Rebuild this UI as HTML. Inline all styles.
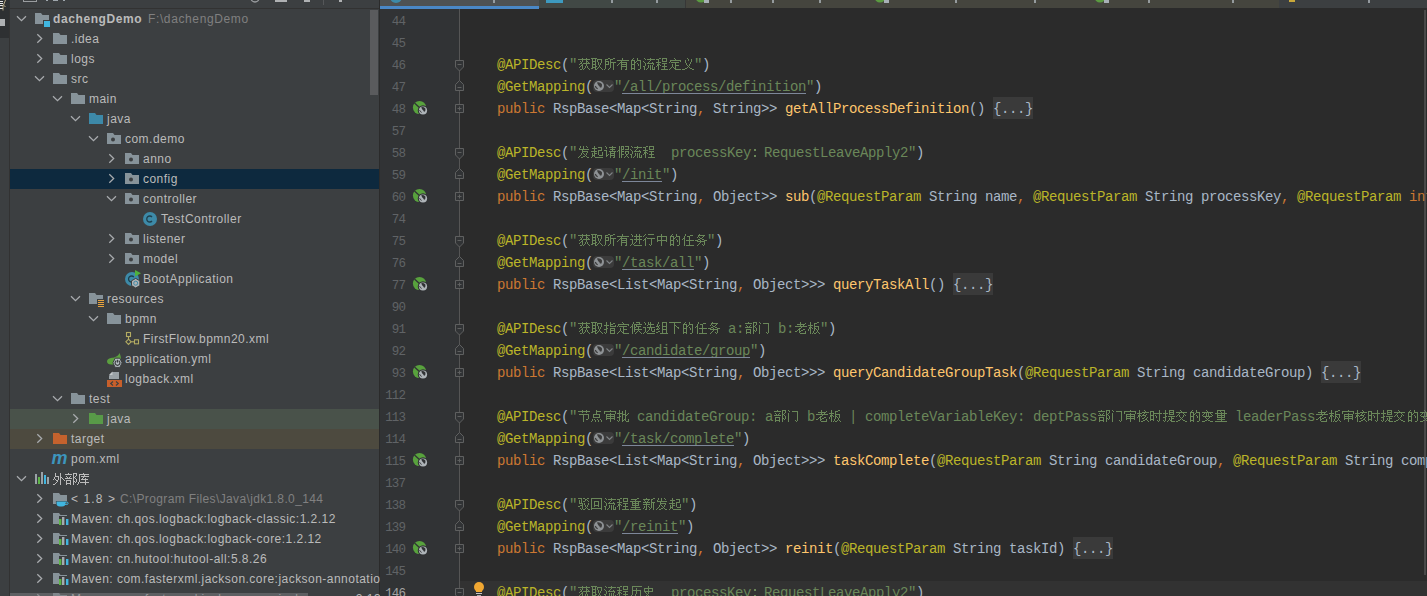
<!DOCTYPE html>
<html><head><meta charset="utf-8"><title>IDEA</title>
<style>
html,body{margin:0;padding:0;}
body{width:1427px;height:596px;overflow:hidden;position:relative;background:#2B2B2B;}
.a{position:absolute;}
.code{position:absolute;font-family:"Liberation Mono",monospace;font-size:14px;letter-spacing:-0.4px;line-height:22px;white-space:pre;}
.ui{position:absolute;font-family:"Liberation Sans",sans-serif;font-size:12px;letter-spacing:0.47px;line-height:20px;white-space:pre;color:#BBBBBB;}
.ln{position:absolute;font-family:"Liberation Mono",monospace;font-size:12.5px;letter-spacing:-0.9px;line-height:22px;white-space:pre;color:#606366;text-align:right;width:40px;left:365px;}
svg{position:absolute;overflow:visible;}
</style></head><body>

<div class="a" style="left:0;top:0;width:9px;height:596px;background:#3C3F41"></div>
<div class="a" style="left:0;top:0;width:9px;height:38px;background:#2E3032"></div>
<div class="a" style="left:9px;top:0;width:1px;height:596px;background:#323232"></div>
<div class="a" style="left:0;top:1px;width:3px;height:1px;background:#E6E6E6"></div>
<div class="a" style="left:0;top:3px;width:3px;height:1px;background:#E6E6E6"></div>
<div class="a" style="left:0;top:5px;width:3px;height:1px;background:#E6E6E6"></div>
<div class="a" style="left:0;top:8px;width:3px;height:1px;background:#E6E6E6"></div>
<svg style="left:0;top:0" width="1" height="1"><path d="M5.5 0L3.5 5L5.5 7M3 5L3 10.5" fill="none" stroke="#C8B890" stroke-width="0.9"/></svg>
<div class="a" style="left:0;top:19px;width:5px;height:7px;background:#AFB1B3"></div>
<div class="a" style="left:10px;top:0;width:369px;height:596px;background:#3C3F41"></div>
<div class="a" style="left:10px;top:8px;width:369px;height:1px;background:#323232"></div>
<div class="a" style="left:379px;top:0;width:1px;height:596px;background:#2B2B2B"></div>
<div class="a" style="left:23px;top:-2px;width:12px;height:3px;border:1px solid #9A9DA0;border-top:0"></div>
<div class="a" style="left:46px;top:0;width:2px;height:1px;background:#9FA7AD"></div>
<div class="a" style="left:53px;top:0;width:5px;height:1px;background:#9FA7AD"></div>
<div class="a" style="left:63px;top:0;width:2px;height:1px;background:#9FA7AD"></div>
<svg style="left:0;top:0" width="1" height="1"><circle cx="255" cy="-2" r="4" fill="none" stroke="#9A9DA0" stroke-width="1.3"/></svg>
<div class="a" style="left:275px;top:0;width:12px;height:2px;background:#AFB1B3"></div>
<div class="a" style="left:304px;top:0;width:6px;height:2px;background:#AFB1B3"></div>
<div class="a" style="left:323px;top:0;width:1px;height:5px;background:#555759"></div>
<div class="a" style="left:339px;top:0;width:3px;height:2px;background:#AFB1B3"></div>
<div class="a" style="left:10px;top:169px;width:369px;height:20px;background:#0D293E"></div>
<div class="a" style="left:10px;top:409px;width:369px;height:20px;background:#49524A"></div>
<div class="a" style="left:10px;top:429px;width:369px;height:20px;background:#4D4A3F"></div>
<div class="ui" style="left:148px;top:9px;color:#808080;letter-spacing:0.62px">F:\dachengDemo</div>
<div class="ui" style="left:120px;top:489px;color:#808080;letter-spacing:0.37px">C:\Program Files\Java\jdk1.8.0_144</div>
<svg style="left:0;top:0" width="1" height="1"><path d="M17.0 16.2L21.5 20.7L26.0 16.2" fill="none" stroke="#A8ABAE" stroke-width="1.25"/></svg>
<svg style="left:0;top:0" width="1" height="1"><path d="M35 13h6l1.5 2h6.5v9h-14z" fill="#87939A"/><rect x="43" y="20" width="8" height="8" fill="#3C3F41"/><rect x="44" y="21" width="6" height="6" fill="#40B6E0"/></svg>
<div class="ui" style="left:53px;top:9px"><span style="color:#BBBBBB;font-weight:bold;letter-spacing:0.6px">dachengDemo</span></div>
<svg style="left:0;top:0" width="1" height="1"><path d="M37.3 34.2L41.7 38.5L37.3 42.8" fill="none" stroke="#A8ABAE" stroke-width="1.25"/></svg>
<svg style="left:0;top:0" width="1" height="1"><path d="M53 33h6l1.5 2h6.5v9h-14z" fill="#87939A"/></svg>
<div class="ui" style="left:71px;top:29px"><span style="color:#BBBBBB;">.idea</span></div>
<svg style="left:0;top:0" width="1" height="1"><path d="M37.3 54.2L41.7 58.5L37.3 62.8" fill="none" stroke="#A8ABAE" stroke-width="1.25"/></svg>
<svg style="left:0;top:0" width="1" height="1"><path d="M53 53h6l1.5 2h6.5v9h-14z" fill="#87939A"/></svg>
<div class="ui" style="left:71px;top:49px"><span style="color:#BBBBBB;">logs</span></div>
<svg style="left:0;top:0" width="1" height="1"><path d="M35.0 76.2L39.5 80.7L44.0 76.2" fill="none" stroke="#A8ABAE" stroke-width="1.25"/></svg>
<svg style="left:0;top:0" width="1" height="1"><path d="M53 73h6l1.5 2h6.5v9h-14z" fill="#87939A"/></svg>
<div class="ui" style="left:71px;top:69px"><span style="color:#BBBBBB;">src</span></div>
<svg style="left:0;top:0" width="1" height="1"><path d="M53.0 96.2L57.5 100.7L62.0 96.2" fill="none" stroke="#A8ABAE" stroke-width="1.25"/></svg>
<svg style="left:0;top:0" width="1" height="1"><path d="M71 93h6l1.5 2h6.5v9h-14z" fill="#87939A"/></svg>
<div class="ui" style="left:89px;top:89px"><span style="color:#BBBBBB;">main</span></div>
<svg style="left:0;top:0" width="1" height="1"><path d="M71.0 116.2L75.5 120.7L80.0 116.2" fill="none" stroke="#A8ABAE" stroke-width="1.25"/></svg>
<svg style="left:0;top:0" width="1" height="1"><path d="M89 113h6l1.5 2h6.5v9h-14z" fill="#3D89A8"/></svg>
<div class="ui" style="left:107px;top:109px"><span style="color:#BBBBBB;">java</span></div>
<svg style="left:0;top:0" width="1" height="1"><path d="M89.0 136.2L93.5 140.7L98.0 136.2" fill="none" stroke="#A8ABAE" stroke-width="1.25"/></svg>
<svg style="left:0;top:0" width="1" height="1"><path d="M107 133h6l1.5 2h6.5v9h-14z" fill="#87939A"/><circle cx="113.0" cy="139.5" r="2" fill="#3C3F41"/></svg>
<div class="ui" style="left:125px;top:129px"><span style="color:#BBBBBB;">com.demo</span></div>
<svg style="left:0;top:0" width="1" height="1"><path d="M109.3 154.2L113.7 158.5L109.3 162.8" fill="none" stroke="#A8ABAE" stroke-width="1.25"/></svg>
<svg style="left:0;top:0" width="1" height="1"><path d="M125 153h6l1.5 2h6.5v9h-14z" fill="#87939A"/><circle cx="131.0" cy="159.5" r="2" fill="#3C3F41"/></svg>
<div class="ui" style="left:143px;top:149px"><span style="color:#BBBBBB;">anno</span></div>
<svg style="left:0;top:0" width="1" height="1"><path d="M109.3 174.2L113.7 178.5L109.3 182.8" fill="none" stroke="#A8ABAE" stroke-width="1.25"/></svg>
<svg style="left:0;top:0" width="1" height="1"><path d="M125 173h6l1.5 2h6.5v9h-14z" fill="#87939A"/><circle cx="131.0" cy="179.5" r="2" fill="#3C3F41"/></svg>
<div class="ui" style="left:143px;top:169px"><span style="color:#BBBBBB;">config</span></div>
<svg style="left:0;top:0" width="1" height="1"><path d="M107.0 196.2L111.5 200.7L116.0 196.2" fill="none" stroke="#A8ABAE" stroke-width="1.25"/></svg>
<svg style="left:0;top:0" width="1" height="1"><path d="M125 193h6l1.5 2h6.5v9h-14z" fill="#87939A"/><circle cx="131.0" cy="199.5" r="2" fill="#3C3F41"/></svg>
<div class="ui" style="left:143px;top:189px"><span style="color:#BBBBBB;">controller</span></div>
<svg style="left:0;top:0" width="1" height="1"><circle cx="150.0" cy="219.0" r="7" fill="#3D8AA8"/><path d="M152.0 217.0a3 3 0 1 0 0 4" fill="none" stroke="#1E3F4D" stroke-width="1.3"/></svg>
<div class="ui" style="left:161px;top:209px"><span style="color:#BBBBBB;">TestController</span></div>
<svg style="left:0;top:0" width="1" height="1"><path d="M109.3 234.2L113.7 238.5L109.3 242.8" fill="none" stroke="#A8ABAE" stroke-width="1.25"/></svg>
<svg style="left:0;top:0" width="1" height="1"><path d="M125 233h6l1.5 2h6.5v9h-14z" fill="#87939A"/><circle cx="131.0" cy="239.5" r="2" fill="#3C3F41"/></svg>
<div class="ui" style="left:143px;top:229px"><span style="color:#BBBBBB;">listener</span></div>
<svg style="left:0;top:0" width="1" height="1"><path d="M109.3 254.2L113.7 258.5L109.3 262.8" fill="none" stroke="#A8ABAE" stroke-width="1.25"/></svg>
<svg style="left:0;top:0" width="1" height="1"><path d="M125 253h6l1.5 2h6.5v9h-14z" fill="#87939A"/><circle cx="131.0" cy="259.5" r="2" fill="#3C3F41"/></svg>
<div class="ui" style="left:143px;top:249px"><span style="color:#BBBBBB;">model</span></div>
<svg style="left:0;top:0" width="1" height="1"><circle cx="132.0" cy="279.0" r="7" fill="#3D8AA8"/><path d="M133.8 277.0a3 3 0 1 0 0 4" fill="none" stroke="#1E3F4D" stroke-width="1.3"/><path d="M135 270l6 3.2l-6 3.2z" fill="#4FB13A"/><path d="M131.5 280.8l4.2 -2.4l4.2 2.4v4.8l-4.2 2.4l-4.2 -2.4z" fill="#AFB1B3" stroke="#3C3F41" stroke-width="1"/><circle cx="135.7" cy="283.2" r="2" fill="none" stroke="#3D8AA8" stroke-width="1"/></svg>
<div class="ui" style="left:143px;top:269px"><span style="color:#BBBBBB;">BootApplication</span></div>
<svg style="left:0;top:0" width="1" height="1"><path d="M71.0 296.2L75.5 300.7L80.0 296.2" fill="none" stroke="#A8ABAE" stroke-width="1.25"/></svg>
<svg style="left:0;top:0" width="1" height="1"><path d="M89 293h6l1.5 2h6.5v9h-14z" fill="#87939A"/><rect x="97" y="299" width="8" height="8" fill="#3C3F41"/><rect x="98" y="300" width="6" height="1" fill="#E8A33E"/><rect x="98" y="302" width="6" height="1" fill="#E8A33E"/><rect x="98" y="304" width="6" height="1" fill="#E8A33E"/><rect x="98" y="306" width="6" height="1" fill="#E8A33E"/></svg>
<div class="ui" style="left:107px;top:289px"><span style="color:#BBBBBB;">resources</span></div>
<svg style="left:0;top:0" width="1" height="1"><path d="M89.0 316.2L93.5 320.7L98.0 316.2" fill="none" stroke="#A8ABAE" stroke-width="1.25"/></svg>
<svg style="left:0;top:0" width="1" height="1"><path d="M107 313h6l1.5 2h6.5v9h-14z" fill="#87939A"/></svg>
<div class="ui" style="left:125px;top:309px"><span style="color:#BBBBBB;">bpmn</span></div>
<svg style="left:0;top:0" width="1" height="1"><rect x="126.5" y="332.5" width="4" height="4" fill="none" stroke="#B3AB62" stroke-width="1.1"/><path d="M128.5 336.5v3" stroke="#B3AB62" fill="none" stroke-width="1.1"/><path d="M128.5 339.2l2.6 2.6l-2.6 2.6l-2.6 -2.6z" fill="none" stroke="#B3AB62" stroke-width="1.1"/><path d="M131.1 341.8h3" stroke="#B3AB62" fill="none" stroke-width="1.1"/><rect x="134.5" y="339.8" width="4" height="4" fill="none" stroke="#B3AB62" stroke-width="1.1"/></svg>
<div class="ui" style="left:143px;top:329px"><span style="color:#BBBBBB;">FirstFlow.bpmn20.xml</span></div>
<svg style="left:0;top:0" width="1" height="1"><path transform="translate(107 349)" d="M12.5 4C11 7.5 8 8.5 5 8.8C2 9.2 0 10.5 0 12.5C0 14.5 1.8 15.5 4 15.5L9 15.5L14 9.5C13.8 7.5 13.3 5.5 12.5 4Z" fill="#5B9F3F"/><path d="M112.90 362.80L115.20 358.20H119.80L122.10 362.80L119.80 367.40H115.20Z" fill="#B4BCC1" stroke="#3C3F41" stroke-width="1"/><path d="M116.40 360.80a2.4 2.4 0 1 0 2.2 0" fill="none" stroke="#3C3F41" stroke-width="1.2"/><path d="M117.50 359.80v2.8" stroke="#3C3F41" stroke-width="1.2"/></svg>
<div class="ui" style="left:125px;top:349px"><span style="color:#BBBBBB;">application.yml</span></div>
<svg style="left:0;top:0" width="1" height="1"><path d="M109 379v-3.5l3.5 -3.5h6.5v7z" fill="#9AA2A7"/><path d="M109 375l3.5 -3.5v3.5z" fill="#C3C8CB"/><rect x="107" y="380" width="15" height="7" fill="#C75F2B"/><path d="M113.0 381.5l-2.3 2l2.3 2M116.0 381.5l2.3 2l-2.3 2" fill="none" stroke="#3C3F41" stroke-width="1.1"/></svg>
<div class="ui" style="left:125px;top:369px"><span style="color:#BBBBBB;">logback.xml</span></div>
<svg style="left:0;top:0" width="1" height="1"><path d="M53.0 396.2L57.5 400.7L62.0 396.2" fill="none" stroke="#A8ABAE" stroke-width="1.25"/></svg>
<svg style="left:0;top:0" width="1" height="1"><path d="M71 393h6l1.5 2h6.5v9h-14z" fill="#87939A"/></svg>
<div class="ui" style="left:89px;top:389px"><span style="color:#BBBBBB;">test</span></div>
<svg style="left:0;top:0" width="1" height="1"><path d="M73.3 414.2L77.7 418.5L73.3 422.8" fill="none" stroke="#A8ABAE" stroke-width="1.25"/></svg>
<svg style="left:0;top:0" width="1" height="1"><path d="M89 413h6l1.5 2h6.5v9h-14z" fill="#589A48"/></svg>
<div class="ui" style="left:107px;top:409px"><span style="color:#BBBBBB;">java</span></div>
<svg style="left:0;top:0" width="1" height="1"><path d="M37.3 434.2L41.7 438.5L37.3 442.8" fill="none" stroke="#A8ABAE" stroke-width="1.25"/></svg>
<svg style="left:0;top:0" width="1" height="1"><path d="M53 433h6l1.5 2h6.5v9h-14z" fill="#C4622D"/></svg>
<div class="ui" style="left:71px;top:429px"><span style="color:#BBBBBB;">target</span></div>
<svg style="left:0;top:0" width="1" height="1"><text x="51.5" y="464.0" font-family="Liberation Sans" font-weight="bold" font-style="italic" font-size="18" fill="#3D95BD" letter-spacing="-1">m</text></svg>
<div class="ui" style="left:71px;top:449px"><span style="color:#BBBBBB;">pom.xml</span></div>
<svg style="left:0;top:0" width="1" height="1"><path d="M17.0 476.2L21.5 480.7L26.0 476.2" fill="none" stroke="#A8ABAE" stroke-width="1.25"/></svg>
<svg style="left:0;top:0" width="1" height="1"><rect x="35" y="474" width="2" height="10" fill="#9AA2A7"/><rect x="38" y="477" width="2" height="7" fill="#5DB547"/><rect x="41" y="472" width="2" height="12" fill="#9AA2A7"/><rect x="44" y="475" width="2" height="9" fill="#40B6E0"/><rect x="47" y="477" width="2" height="7" fill="#9AA2A7"/></svg>
<svg style="left:53px;top:471px" width="36" height="20" shape-rendering="crispEdges"><path d="M2 2h1v1h-1zM7 2h1v1h-1zM2 3h1v1h-1zM7 3h1v1h-1zM2 4h1v1h-1zM7 4h1v1h-1zM2 5h4v1h-4zM7 5h1v1h-1zM1 6h1v1h-1zM5 6h1v1h-1zM7 6h2v1h-2zM1 7h1v1h-1zM5 7h1v1h-1zM7 7h1v1h-1zM9 7h1v1h-1zM0 8h1v1h-1zM2 8h1v1h-1zM5 8h1v1h-1zM7 8h1v1h-1zM10 8h1v1h-1zM3 9h2v1h-2zM7 9h1v1h-1zM11 9h1v1h-1zM4 10h1v1h-1zM7 10h1v1h-1zM3 11h1v1h-1zM7 11h1v1h-1zM2 12h1v1h-1zM7 12h1v1h-1zM0 13h2v1h-2zM7 13h1v1h-1zM15 2h1v1h-1zM20 2h4v1h-4zM12 3h7v1h-7zM20 3h1v1h-1zM23 3h1v1h-1zM20 4h1v1h-1zM23 4h1v1h-1zM13 5h1v1h-1zM17 5h1v1h-1zM20 5h1v1h-1zM22 5h1v1h-1zM14 6h1v1h-1zM16 6h1v1h-1zM20 6h2v1h-2zM12 7h7v1h-7zM20 7h1v1h-1zM22 7h1v1h-1zM20 8h1v1h-1zM23 8h1v1h-1zM13 9h5v1h-5zM20 9h1v1h-1zM23 9h1v1h-1zM13 10h1v1h-1zM17 10h1v1h-1zM20 10h2v1h-2zM23 10h1v1h-1zM13 11h1v1h-1zM17 11h1v1h-1zM20 11h1v1h-1zM22 11h1v1h-1zM13 12h5v1h-5zM20 12h1v1h-1zM13 13h1v1h-1zM17 13h1v1h-1zM20 13h1v1h-1zM30 2h1v1h-1zM26 3h10v1h-10zM26 4h1v1h-1zM31 4h1v1h-1zM26 5h1v1h-1zM28 5h8v1h-8zM26 6h1v1h-1zM30 6h1v1h-1zM26 7h1v1h-1zM29 7h1v1h-1zM32 7h1v1h-1zM26 8h1v1h-1zM28 8h7v1h-7zM26 9h1v1h-1zM32 9h1v1h-1zM26 10h1v1h-1zM32 10h1v1h-1zM25 11h1v1h-1zM27 11h9v1h-9zM25 12h1v1h-1zM32 12h1v1h-1zM24 13h1v1h-1zM32 13h1v1h-1z" fill="#BBBBBB"/></svg>
<svg style="left:0;top:0" width="1" height="1"><path d="M37.3 494.2L41.7 498.5L37.3 502.8" fill="none" stroke="#A8ABAE" stroke-width="1.25"/></svg>
<svg style="left:0;top:0" width="1" height="1"><path d="M53 493h6l1.5 2h6.5v9h-14z" fill="#87939A"/><path d="M56.5 501.5h9v1.5a3.5 3.5 0 0 1 -3.5 3.5h-2a3.5 3.5 0 0 1 -3.5 -3.5z" fill="#40B6E0" stroke="#3C3F41" stroke-width="1.2"/><ellipse cx="66.3" cy="503.3" rx="1.8" ry="1.3" fill="none" stroke="#3C3F41" stroke-width="2.2"/><ellipse cx="66.3" cy="503.3" rx="1.8" ry="1.3" fill="none" stroke="#40B6E0" stroke-width="1"/><path d="M56.5 501.5h9v1.5a3.5 3.5 0 0 1 -3.5 3.5h-2a3.5 3.5 0 0 1 -3.5 -3.5z" fill="#40B6E0"/></svg>
<div class="ui" style="left:71px;top:489px"><span style="color:#BBBBBB;letter-spacing:1.1px">&lt; 1.8 &gt;</span></div>
<svg style="left:0;top:0" width="1" height="1"><path d="M37.3 514.2L41.7 518.5L37.3 522.8" fill="none" stroke="#A8ABAE" stroke-width="1.25"/></svg>
<svg style="left:0;top:0" width="1" height="1"><path d="M53 513h6l1.5 2h6.5v9h-14z" fill="#87939A"/><rect x="59" y="516" width="10" height="10" fill="#3C3F41"/><rect x="59" y="519" width="2.4" height="6" fill="#5DB547"/><rect x="62" y="517" width="2.4" height="8" fill="#A4ACB1"/><rect x="66" y="519" width="2.4" height="6" fill="#40B6E0"/></svg>
<div class="ui" style="left:71px;top:509px"><span style="color:#BBBBBB;">Maven: ch.qos.logback:logback-classic:1.2.12</span></div>
<svg style="left:0;top:0" width="1" height="1"><path d="M37.3 534.2L41.7 538.5L37.3 542.8" fill="none" stroke="#A8ABAE" stroke-width="1.25"/></svg>
<svg style="left:0;top:0" width="1" height="1"><path d="M53 533h6l1.5 2h6.5v9h-14z" fill="#87939A"/><rect x="59" y="536" width="10" height="10" fill="#3C3F41"/><rect x="59" y="539" width="2.4" height="6" fill="#5DB547"/><rect x="62" y="537" width="2.4" height="8" fill="#A4ACB1"/><rect x="66" y="539" width="2.4" height="6" fill="#40B6E0"/></svg>
<div class="ui" style="left:71px;top:529px"><span style="color:#BBBBBB;">Maven: ch.qos.logback:logback-core:1.2.12</span></div>
<svg style="left:0;top:0" width="1" height="1"><path d="M37.3 554.2L41.7 558.5L37.3 562.8" fill="none" stroke="#A8ABAE" stroke-width="1.25"/></svg>
<svg style="left:0;top:0" width="1" height="1"><path d="M53 553h6l1.5 2h6.5v9h-14z" fill="#87939A"/><rect x="59" y="556" width="10" height="10" fill="#3C3F41"/><rect x="59" y="559" width="2.4" height="6" fill="#5DB547"/><rect x="62" y="557" width="2.4" height="8" fill="#A4ACB1"/><rect x="66" y="559" width="2.4" height="6" fill="#40B6E0"/></svg>
<div class="ui" style="left:71px;top:549px"><span style="color:#BBBBBB;">Maven: cn.hutool:hutool-all:5.8.26</span></div>
<svg style="left:0;top:0" width="1" height="1"><path d="M37.3 574.2L41.7 578.5L37.3 582.8" fill="none" stroke="#A8ABAE" stroke-width="1.25"/></svg>
<svg style="left:0;top:0" width="1" height="1"><path d="M53 573h6l1.5 2h6.5v9h-14z" fill="#87939A"/><rect x="59" y="576" width="10" height="10" fill="#3C3F41"/><rect x="59" y="579" width="2.4" height="6" fill="#5DB547"/><rect x="62" y="577" width="2.4" height="8" fill="#A4ACB1"/><rect x="66" y="579" width="2.4" height="6" fill="#40B6E0"/></svg>
<div class="ui" style="left:71px;top:569px"><span style="color:#BBBBBB;">Maven: com.fasterxml.jackson.core:jackson-annotations:2.13.5</span></div>
<svg style="left:0;top:0" width="1" height="1"><path d="M37.3 594.2L41.7 598.5L37.3 602.8" fill="none" stroke="#A8ABAE" stroke-width="1.25"/></svg>
<svg style="left:0;top:0" width="1" height="1"><path d="M53 593h6l1.5 2h6.5v9h-14z" fill="#87939A"/><rect x="59" y="596" width="10" height="10" fill="#3C3F41"/><rect x="59" y="599" width="2.4" height="6" fill="#5DB547"/><rect x="62" y="597" width="2.4" height="8" fill="#A4ACB1"/><rect x="66" y="599" width="2.4" height="6" fill="#40B6E0"/></svg>
<div class="ui" style="left:71px;top:589px"><span style="color:#BBBBBB;">Maven: com.fasterxml.jackson.core:jackson-core:2.13.5</span></div>
<div class="a" style="left:370px;top:10px;width:8px;height:85px;background:#5A5B5D"></div>
<div class="a" style="left:10px;top:593px;width:298px;height:3px;background:rgba(120,122,125,0.55)"></div>
<div class="a" style="left:380px;top:0;width:1047px;height:8px;background:#3C3F41"></div>
<div class="a" style="left:380px;top:0;width:159px;height:8px;background:#4E5254"></div>
<div class="a" style="left:539px;top:0;width:146px;height:8px;background:#414845"></div>
<div class="a" style="left:685px;top:0;width:1px;height:8px;background:#373737"></div>
<div class="a" style="left:686px;top:0;width:593px;height:8px;background:#45453E"></div>
<div class="a" style="left:380px;top:8px;width:1047px;height:1px;background:#2B2B2B"></div>
<div class="a" style="left:380px;top:6px;width:159px;height:3px;background:#4A88C7"></div>
<svg style="left:0;top:0" width="1" height="1"><circle cx="396" cy="-3" r="6" fill="#3D8AA8"/><rect x="546" y="-3" width="17" height="6" fill="#3D9AC0"/><circle cx="701" cy="-3" r="5.5" fill="#5A9A40"/><rect x="704" y="-3" width="5" height="6" fill="#A8B0B6"/><circle cx="880" cy="-3" r="5.5" fill="#5A9A40"/><rect x="884" y="-3" width="5" height="6" fill="#A8B0B6"/><circle cx="1100" cy="-3" r="5.5" fill="#5A9A40"/><rect x="1104" y="-3" width="5" height="6" fill="#A8B0B6"/><rect x="1289" y="-3" width="6" height="5" fill="#C9A83A"/><rect x="1297" y="-3" width="4" height="3" fill="#C9A83A"/></svg>
<div class="a" style="left:493px;top:0;width:2px;height:3px;background:#A9B0B5;opacity:.8"></div>
<div class="a" style="left:611px;top:0;width:2px;height:3px;background:#A9B0B5;opacity:.8"></div>
<div class="a" style="left:656px;top:0;width:2px;height:3px;background:#A9B0B5;opacity:.8"></div>
<div class="a" style="left:730px;top:0;width:2px;height:3px;background:#A9B0B5;opacity:.8"></div>
<div class="a" style="left:772px;top:0;width:2px;height:3px;background:#A9B0B5;opacity:.8"></div>
<div class="a" style="left:819px;top:0;width:2px;height:3px;background:#A9B0B5;opacity:.8"></div>
<div class="a" style="left:955px;top:0;width:2px;height:3px;background:#A9B0B5;opacity:.8"></div>
<div class="a" style="left:1034px;top:0;width:2px;height:3px;background:#A9B0B5;opacity:.8"></div>
<div class="a" style="left:1148px;top:0;width:2px;height:3px;background:#A9B0B5;opacity:.8"></div>
<div class="a" style="left:1232px;top:0;width:2px;height:3px;background:#A9B0B5;opacity:.8"></div>
<div class="a" style="left:1368px;top:0;width:2px;height:3px;background:#A9B0B5;opacity:.8"></div>
<div class="a" style="left:380px;top:9px;width:79px;height:587px;background:#313335"></div>
<div class="a" style="left:459px;top:581px;width:968px;height:22px;background:#323232"></div>
<div class="a" style="left:380px;top:581px;width:79px;height:22px;background:#313335"></div>
<div class="a" style="left:459px;top:9px;width:1px;height:587px;background:#555555"></div>
<div class="ln" style="top:11px;color:#606366">44</div>
<div class="ln" style="top:33px;color:#606366">45</div>
<div class="ln" style="top:55px;color:#606366">46</div>
<div class="ln" style="top:77px;color:#606366">47</div>
<div class="ln" style="top:99px;color:#606366">48</div>
<div class="ln" style="top:121px;color:#606366">57</div>
<div class="ln" style="top:143px;color:#606366">58</div>
<div class="ln" style="top:165px;color:#606366">59</div>
<div class="ln" style="top:187px;color:#606366">60</div>
<div class="ln" style="top:209px;color:#606366">74</div>
<div class="ln" style="top:231px;color:#606366">75</div>
<div class="ln" style="top:253px;color:#606366">76</div>
<div class="ln" style="top:275px;color:#606366">77</div>
<div class="ln" style="top:297px;color:#606366">90</div>
<div class="ln" style="top:319px;color:#606366">91</div>
<div class="ln" style="top:341px;color:#606366">92</div>
<div class="ln" style="top:363px;color:#606366">93</div>
<div class="ln" style="top:385px;color:#606366">112</div>
<div class="ln" style="top:407px;color:#606366">113</div>
<div class="ln" style="top:429px;color:#606366">114</div>
<div class="ln" style="top:451px;color:#606366">115</div>
<div class="ln" style="top:473px;color:#606366">137</div>
<div class="ln" style="top:495px;color:#606366">138</div>
<div class="ln" style="top:517px;color:#606366">139</div>
<div class="ln" style="top:539px;color:#606366">140</div>
<div class="ln" style="top:561px;color:#606366">145</div>
<div class="ln" style="top:583px;color:#A4A3A3">146</div>
<div class="code" style="left:497px;top:54px;color:#BBB529">@APIDesc</div>
<div class="code" style="left:561px;top:54px;color:#A9B7C6">(</div>
<div class="code" style="left:569px;top:54px;color:#6A8759">&quot;</div>
<svg style="left:577px;top:53px" width="117" height="22" shape-rendering="crispEdges"><path d="M5 5h1v1h-1zM9 5h1v1h-1zM1 6h12v1h-12zM5 7h1v1h-1zM9 7h1v1h-1zM3 8h1v1h-1zM5 8h1v1h-1zM9 8h2v1h-2zM4 9h1v1h-1zM9 9h1v1h-1zM11 9h1v1h-1zM3 10h2v1h-2zM6 10h7v1h-7zM2 11h1v1h-1zM5 11h1v1h-1zM9 11h1v1h-1zM4 12h2v1h-2zM9 12h1v1h-1zM3 13h1v1h-1zM5 13h1v1h-1zM8 13h1v1h-1zM10 13h1v1h-1zM2 14h1v1h-1zM5 14h1v1h-1zM8 14h1v1h-1zM10 14h1v1h-1zM5 15h1v1h-1zM7 15h1v1h-1zM11 15h1v1h-1zM3 16h2v1h-2zM6 16h1v1h-1zM12 16h1v1h-1zM14 5h6v1h-6zM15 6h1v1h-1zM18 6h1v1h-1zM20 6h5v1h-5zM15 7h1v1h-1zM18 7h1v1h-1zM20 7h1v1h-1zM24 7h1v1h-1zM15 8h4v1h-4zM20 8h1v1h-1zM24 8h1v1h-1zM15 9h1v1h-1zM18 9h1v1h-1zM21 9h1v1h-1zM24 9h1v1h-1zM15 10h1v1h-1zM18 10h1v1h-1zM21 10h1v1h-1zM23 10h1v1h-1zM15 11h4v1h-4zM21 11h1v1h-1zM23 11h1v1h-1zM15 12h1v1h-1zM18 12h1v1h-1zM22 12h1v1h-1zM15 13h1v1h-1zM18 13h2v1h-2zM22 13h1v1h-1zM15 14h4v1h-4zM21 14h1v1h-1zM23 14h1v1h-1zM14 15h2v1h-2zM18 15h1v1h-1zM20 15h1v1h-1zM24 15h1v1h-1zM18 16h2v1h-2zM25 16h1v1h-1zM31 5h2v1h-2zM36 5h2v1h-2zM28 6h3v1h-3zM33 6h3v1h-3zM28 7h1v1h-1zM33 7h1v1h-1zM28 8h4v1h-4zM33 8h1v1h-1zM28 9h1v1h-1zM31 9h1v1h-1zM33 9h6v1h-6zM28 10h1v1h-1zM31 10h1v1h-1zM33 10h1v1h-1zM36 10h1v1h-1zM28 11h4v1h-4zM33 11h1v1h-1zM36 11h1v1h-1zM28 12h1v1h-1zM33 12h1v1h-1zM36 12h1v1h-1zM28 13h1v1h-1zM33 13h1v1h-1zM36 13h1v1h-1zM28 14h1v1h-1zM33 14h1v1h-1zM36 14h1v1h-1zM28 15h1v1h-1zM32 15h1v1h-1zM36 15h1v1h-1zM27 16h1v1h-1zM31 16h1v1h-1zM36 16h1v1h-1zM45 5h1v1h-1zM45 6h1v1h-1zM40 7h12v1h-12zM44 8h1v1h-1zM43 9h7v1h-7zM42 10h1v1h-1zM44 10h1v1h-1zM49 10h1v1h-1zM41 11h1v1h-1zM44 11h6v1h-6zM40 12h1v1h-1zM44 12h1v1h-1zM49 12h1v1h-1zM44 13h6v1h-6zM44 14h1v1h-1zM49 14h1v1h-1zM44 15h1v1h-1zM49 15h1v1h-1zM44 16h1v1h-1zM48 16h2v1h-2zM56 5h1v1h-1zM60 5h1v1h-1zM55 6h1v1h-1zM60 6h1v1h-1zM54 7h4v1h-4zM60 7h4v1h-4zM54 8h1v1h-1zM57 8h1v1h-1zM59 8h1v1h-1zM63 8h1v1h-1zM54 9h1v1h-1zM57 9h2v1h-2zM63 9h1v1h-1zM54 10h1v1h-1zM57 10h1v1h-1zM60 10h1v1h-1zM63 10h1v1h-1zM54 11h4v1h-4zM61 11h1v1h-1zM63 11h1v1h-1zM54 12h1v1h-1zM57 12h1v1h-1zM61 12h1v1h-1zM63 12h1v1h-1zM54 13h1v1h-1zM57 13h1v1h-1zM63 13h1v1h-1zM54 14h1v1h-1zM57 14h1v1h-1zM63 14h1v1h-1zM54 15h4v1h-4zM63 15h1v1h-1zM54 16h1v1h-1zM57 16h1v1h-1zM61 16h2v1h-2zM67 5h1v1h-1zM73 5h1v1h-1zM68 6h1v1h-1zM70 6h8v1h-8zM73 7h1v1h-1zM66 8h1v1h-1zM72 8h1v1h-1zM67 9h1v1h-1zM71 9h1v1h-1zM75 9h1v1h-1zM68 10h1v1h-1zM70 10h7v1h-7zM68 11h1v1h-1zM76 11h1v1h-1zM68 12h1v1h-1zM71 12h1v1h-1zM73 12h1v1h-1zM75 12h1v1h-1zM66 13h2v1h-2zM71 13h1v1h-1zM73 13h1v1h-1zM75 13h1v1h-1zM67 14h1v1h-1zM71 14h1v1h-1zM73 14h1v1h-1zM75 14h1v1h-1zM77 14h1v1h-1zM67 15h1v1h-1zM70 15h1v1h-1zM73 15h1v1h-1zM75 15h1v1h-1zM77 15h1v1h-1zM67 16h1v1h-1zM69 16h1v1h-1zM73 16h1v1h-1zM75 16h3v1h-3zM82 5h2v1h-2zM85 5h5v1h-5zM79 6h3v1h-3zM85 6h1v1h-1zM89 6h1v1h-1zM81 7h1v1h-1zM85 7h1v1h-1zM89 7h1v1h-1zM81 8h1v1h-1zM85 8h5v1h-5zM79 9h5v1h-5zM81 10h1v1h-1zM85 10h5v1h-5zM80 11h3v1h-3zM87 11h1v1h-1zM80 12h2v1h-2zM83 12h1v1h-1zM87 12h1v1h-1zM79 13h1v1h-1zM81 13h1v1h-1zM85 13h5v1h-5zM81 14h1v1h-1zM87 14h1v1h-1zM81 15h1v1h-1zM87 15h1v1h-1zM81 16h1v1h-1zM84 16h7v1h-7zM97 5h1v1h-1zM98 6h1v1h-1zM93 7h11v1h-11zM93 8h1v1h-1zM103 8h1v1h-1zM92 9h1v1h-1zM94 9h8v1h-8zM98 10h1v1h-1zM95 11h1v1h-1zM98 11h1v1h-1zM95 12h1v1h-1zM98 12h4v1h-4zM95 13h1v1h-1zM98 13h1v1h-1zM94 14h1v1h-1zM96 14h1v1h-1zM98 14h1v1h-1zM93 15h1v1h-1zM97 15h2v1h-2zM92 16h1v1h-1zM98 16h6v1h-6zM110 5h1v1h-1zM111 6h1v1h-1zM114 6h1v1h-1zM108 7h1v1h-1zM111 7h1v1h-1zM114 7h1v1h-1zM108 8h1v1h-1zM114 8h1v1h-1zM108 9h1v1h-1zM113 9h1v1h-1zM109 10h1v1h-1zM113 10h1v1h-1zM109 11h1v1h-1zM112 11h1v1h-1zM110 12h1v1h-1zM112 12h1v1h-1zM111 13h1v1h-1zM110 14h1v1h-1zM112 14h1v1h-1zM108 15h2v1h-2zM113 15h2v1h-2zM105 16h3v1h-3zM115 16h2v1h-2z" fill="#6A8759"/></svg>
<div class="code" style="left:694px;top:54px;color:#6A8759">&quot;</div>
<div class="code" style="left:702px;top:54px;color:#A9B7C6">)</div>
<svg style="left:0;top:0" width="1" height="1"><path d="M455.5 60.5h8v6.5l-4 4l-4 -4z" fill="#313335" stroke="#5F6060"/><path d="M457.5 64.5h4" fill="none" stroke="#5F6060"/></svg>
<div class="code" style="left:497px;top:76px;color:#BBB529">@GetMapping</div>
<div class="code" style="left:585px;top:76px;color:#A9B7C6">(</div>
<svg style="left:0;top:0" width="1" height="1"><rect x="593" y="80" width="21" height="12" rx="4" fill="#3B3B3B"/><circle cx="599.0" cy="86.0" r="5" fill="#8E9295"/><path d="M596.9 82.6q2.6 -1 5 1.4q0.5 2.2 -0.7 3.8q-1.9 -0.2 -1.9 -1.7q-1 -0.4 -1.4 -1.5z" fill="#3B3B3B"/><path d="M595.3 86.0q0.7 2 2.4 2.7" fill="none" stroke="#3B3B3B" stroke-width="1.2"/><path d="M606.5 84.5l3 3l3 -3" fill="none" stroke="#7F8386" stroke-width="1.1"/></svg>
<div class="code" style="left:614px;top:76px;color:#6A8759">&quot;</div>
<div class="code" style="left:622px;top:76px;color:#6A8759">/all/process/definition</div>
<div class="a" style="left:622px;top:93px;width:184px;height:1px;background:#7D8799"></div>
<div class="code" style="left:806px;top:76px;color:#6A8759">&quot;</div>
<div class="code" style="left:814px;top:76px;color:#A9B7C6">)</div>
<svg style="left:0;top:0" width="1" height="1"><path d="M455.5 90.5v-6l4 -4l4 4v6z" fill="#313335" stroke="#5F6060"/><path d="M457.5 87.5h4" fill="none" stroke="#5F6060"/></svg>
<div class="code" style="left:497px;top:98px;color:#CC7832">public </div>
<div class="code" style="left:553px;top:98px;color:#A9B7C6">RspBase&lt;Map&lt;String</div>
<div class="code" style="left:697px;top:98px;color:#CC7832">, </div>
<div class="code" style="left:713px;top:98px;color:#A9B7C6">String&gt;&gt; </div>
<div class="code" style="left:785px;top:98px;color:#FFC66D">getAllProcessDefinition</div>
<div class="code" style="left:969px;top:98px;color:#A9B7C6">() </div>
<div class="a" style="left:993px;top:97px;width:40px;height:22px;background:#3A3A3A"></div>
<div class="code" style="left:993px;top:98px;color:#A9B7C6">{...}</div>
<svg style="left:0;top:0" width="1" height="1"><path d="M455.5 104.5h8v8h-8z" fill="#313335" stroke="#5F6060"/><path d="M457.5 108.5h4M459.5 106.5v4" fill="none" stroke="#5F6060"/></svg>
<svg style="left:0;top:0" width="1" height="1"><circle cx="419.5" cy="107.5" r="6.6" fill="#58A23D"/><path d="M414.5 103.0L421 109.0" stroke="#313335" stroke-width="1.3"/><circle cx="423" cy="110.5" r="5.2" fill="#313335"/><circle cx="423" cy="110.5" r="4.1" fill="#AEB4B8"/><path d="M421.2 107.3q2.2 -0.8 4.2 1.2q0.4 1.8 -0.6 3.2q-1.6 -0.2 -1.6 -1.4q-0.8 -0.3 -1.2 -1.2z" fill="#313335"/><path d="M419.6 110.2q0.6 1.6 2 2.2" fill="none" stroke="#313335" stroke-width="1"/></svg>
<div class="code" style="left:497px;top:142px;color:#BBB529">@APIDesc</div>
<div class="code" style="left:561px;top:142px;color:#A9B7C6">(</div>
<div class="code" style="left:569px;top:142px;color:#6A8759">&quot;</div>
<svg style="left:577px;top:141px" width="78" height="22" shape-rendering="crispEdges"><path d="M3 5h1v1h-1zM6 5h1v1h-1zM9 5h1v1h-1zM3 6h1v1h-1zM6 6h1v1h-1zM10 6h1v1h-1zM2 7h1v1h-1zM6 7h1v1h-1zM2 8h10v1h-10zM5 9h1v1h-1zM5 10h6v1h-6zM5 11h1v1h-1zM10 11h1v1h-1zM4 12h1v1h-1zM6 12h1v1h-1zM9 12h1v1h-1zM4 13h1v1h-1zM7 13h1v1h-1zM9 13h1v1h-1zM3 14h1v1h-1zM8 14h1v1h-1zM2 15h1v1h-1zM6 15h2v1h-2zM9 15h1v1h-1zM1 16h1v1h-1zM4 16h2v1h-2zM10 16h2v1h-2zM17 5h1v1h-1zM17 6h1v1h-1zM21 6h4v1h-4zM15 7h5v1h-5zM24 7h1v1h-1zM17 8h1v1h-1zM24 8h1v1h-1zM17 9h1v1h-1zM21 9h4v1h-4zM14 10h6v1h-6zM21 10h1v1h-1zM17 11h1v1h-1zM21 11h1v1h-1zM25 11h1v1h-1zM15 12h1v1h-1zM17 12h3v1h-3zM21 12h1v1h-1zM25 12h1v1h-1zM15 13h1v1h-1zM17 13h1v1h-1zM21 13h1v1h-1zM25 13h1v1h-1zM15 14h3v1h-3zM22 14h4v1h-4zM15 15h1v1h-1zM17 15h1v1h-1zM14 16h1v1h-1zM18 16h8v1h-8zM28 5h1v1h-1zM35 5h1v1h-1zM29 6h1v1h-1zM32 6h7v1h-7zM29 7h1v1h-1zM35 7h1v1h-1zM33 8h5v1h-5zM27 9h3v1h-3zM35 9h1v1h-1zM29 10h1v1h-1zM32 10h7v1h-7zM29 11h1v1h-1zM33 11h1v1h-1zM37 11h1v1h-1zM29 12h1v1h-1zM33 12h5v1h-5zM29 13h1v1h-1zM31 13h1v1h-1zM33 13h1v1h-1zM37 13h1v1h-1zM29 14h2v1h-2zM33 14h5v1h-5zM29 15h1v1h-1zM33 15h1v1h-1zM37 15h1v1h-1zM33 16h1v1h-1zM36 16h2v1h-2zM42 5h1v1h-1zM44 5h3v1h-3zM48 5h4v1h-4zM42 6h1v1h-1zM44 6h1v1h-1zM46 6h1v1h-1zM51 6h1v1h-1zM42 7h1v1h-1zM44 7h1v1h-1zM46 7h1v1h-1zM51 7h1v1h-1zM42 8h1v1h-1zM44 8h3v1h-3zM48 8h4v1h-4zM41 9h2v1h-2zM44 9h1v1h-1zM40 10h1v1h-1zM42 10h1v1h-1zM44 10h3v1h-3zM48 10h4v1h-4zM42 11h1v1h-1zM44 11h1v1h-1zM48 11h1v1h-1zM51 11h1v1h-1zM42 12h1v1h-1zM44 12h1v1h-1zM48 12h1v1h-1zM51 12h1v1h-1zM42 13h1v1h-1zM44 13h3v1h-3zM49 13h2v1h-2zM42 14h1v1h-1zM44 14h1v1h-1zM49 14h1v1h-1zM42 15h1v1h-1zM44 15h1v1h-1zM48 15h1v1h-1zM50 15h1v1h-1zM42 16h1v1h-1zM44 16h1v1h-1zM47 16h1v1h-1zM51 16h1v1h-1zM54 5h1v1h-1zM60 5h1v1h-1zM55 6h1v1h-1zM57 6h8v1h-8zM60 7h1v1h-1zM53 8h1v1h-1zM59 8h1v1h-1zM54 9h1v1h-1zM58 9h1v1h-1zM62 9h1v1h-1zM55 10h1v1h-1zM57 10h7v1h-7zM55 11h1v1h-1zM63 11h1v1h-1zM55 12h1v1h-1zM58 12h1v1h-1zM60 12h1v1h-1zM62 12h1v1h-1zM53 13h2v1h-2zM58 13h1v1h-1zM60 13h1v1h-1zM62 13h1v1h-1zM54 14h1v1h-1zM58 14h1v1h-1zM60 14h1v1h-1zM62 14h1v1h-1zM64 14h1v1h-1zM54 15h1v1h-1zM57 15h1v1h-1zM60 15h1v1h-1zM62 15h1v1h-1zM64 15h1v1h-1zM54 16h1v1h-1zM56 16h1v1h-1zM60 16h1v1h-1zM62 16h3v1h-3zM69 5h2v1h-2zM72 5h5v1h-5zM66 6h3v1h-3zM72 6h1v1h-1zM76 6h1v1h-1zM68 7h1v1h-1zM72 7h1v1h-1zM76 7h1v1h-1zM68 8h1v1h-1zM72 8h5v1h-5zM66 9h5v1h-5zM68 10h1v1h-1zM72 10h5v1h-5zM67 11h3v1h-3zM74 11h1v1h-1zM67 12h2v1h-2zM70 12h1v1h-1zM74 12h1v1h-1zM66 13h1v1h-1zM68 13h1v1h-1zM72 13h5v1h-5zM68 14h1v1h-1zM74 14h1v1h-1zM68 15h1v1h-1zM74 15h1v1h-1zM68 16h1v1h-1zM71 16h7v1h-7z" fill="#6A8759"/></svg>
<div class="code" style="left:655px;top:142px;color:#6A8759">  processKey</div>
<svg style="left:751px;top:141px" width="13" height="22" shape-rendering="crispEdges"><path d="M3 8h2v2h-2zM3 14h2v2h-2z" fill="#6A8759"/></svg>
<div class="code" style="left:764px;top:142px;color:#6A8759">RequestLeaveApply2&quot;</div>
<div class="code" style="left:916px;top:142px;color:#A9B7C6">)</div>
<svg style="left:0;top:0" width="1" height="1"><path d="M455.5 148.5h8v6.5l-4 4l-4 -4z" fill="#313335" stroke="#5F6060"/><path d="M457.5 152.5h4" fill="none" stroke="#5F6060"/></svg>
<div class="code" style="left:497px;top:164px;color:#BBB529">@GetMapping</div>
<div class="code" style="left:585px;top:164px;color:#A9B7C6">(</div>
<svg style="left:0;top:0" width="1" height="1"><rect x="593" y="168" width="21" height="12" rx="4" fill="#3B3B3B"/><circle cx="599.0" cy="174.0" r="5" fill="#8E9295"/><path d="M596.9 170.6q2.6 -1 5 1.4q0.5 2.2 -0.7 3.8q-1.9 -0.2 -1.9 -1.7q-1 -0.4 -1.4 -1.5z" fill="#3B3B3B"/><path d="M595.3 174.0q0.7 2 2.4 2.7" fill="none" stroke="#3B3B3B" stroke-width="1.2"/><path d="M606.5 172.5l3 3l3 -3" fill="none" stroke="#7F8386" stroke-width="1.1"/></svg>
<div class="code" style="left:614px;top:164px;color:#6A8759">&quot;</div>
<div class="code" style="left:622px;top:164px;color:#6A8759">/init</div>
<div class="a" style="left:622px;top:181px;width:40px;height:1px;background:#7D8799"></div>
<div class="code" style="left:662px;top:164px;color:#6A8759">&quot;</div>
<div class="code" style="left:670px;top:164px;color:#A9B7C6">)</div>
<svg style="left:0;top:0" width="1" height="1"><path d="M455.5 178.5v-6l4 -4l4 4v6z" fill="#313335" stroke="#5F6060"/><path d="M457.5 175.5h4" fill="none" stroke="#5F6060"/></svg>
<div class="code" style="left:497px;top:186px;color:#CC7832">public </div>
<div class="code" style="left:553px;top:186px;color:#A9B7C6">RspBase&lt;Map&lt;String</div>
<div class="code" style="left:697px;top:186px;color:#CC7832">, </div>
<div class="code" style="left:713px;top:186px;color:#A9B7C6">Object&gt;&gt; </div>
<div class="code" style="left:785px;top:186px;color:#FFC66D">sub</div>
<div class="code" style="left:809px;top:186px;color:#A9B7C6">(</div>
<div class="code" style="left:817px;top:186px;color:#BBB529">@RequestParam </div>
<div class="code" style="left:929px;top:186px;color:#A9B7C6">String name</div>
<div class="code" style="left:1017px;top:186px;color:#CC7832">, </div>
<div class="code" style="left:1033px;top:186px;color:#BBB529">@RequestParam </div>
<div class="code" style="left:1145px;top:186px;color:#A9B7C6">String processKey</div>
<div class="code" style="left:1281px;top:186px;color:#CC7832">, </div>
<div class="code" style="left:1297px;top:186px;color:#BBB529">@RequestParam </div>
<div class="code" style="left:1409px;top:186px;color:#CC7832">int</div>
<svg style="left:0;top:0" width="1" height="1"><path d="M455.5 192.5h8v8h-8z" fill="#313335" stroke="#5F6060"/><path d="M457.5 196.5h4M459.5 194.5v4" fill="none" stroke="#5F6060"/></svg>
<svg style="left:0;top:0" width="1" height="1"><circle cx="419.5" cy="195.5" r="6.6" fill="#58A23D"/><path d="M414.5 191.0L421 197.0" stroke="#313335" stroke-width="1.3"/><circle cx="423" cy="198.5" r="5.2" fill="#313335"/><circle cx="423" cy="198.5" r="4.1" fill="#AEB4B8"/><path d="M421.2 195.3q2.2 -0.8 4.2 1.2q0.4 1.8 -0.6 3.2q-1.6 -0.2 -1.6 -1.4q-0.8 -0.3 -1.2 -1.2z" fill="#313335"/><path d="M419.6 198.2q0.6 1.6 2 2.2" fill="none" stroke="#313335" stroke-width="1"/></svg>
<div class="code" style="left:497px;top:230px;color:#BBB529">@APIDesc</div>
<div class="code" style="left:561px;top:230px;color:#A9B7C6">(</div>
<div class="code" style="left:569px;top:230px;color:#6A8759">&quot;</div>
<svg style="left:577px;top:229px" width="130" height="22" shape-rendering="crispEdges"><path d="M5 5h1v1h-1zM9 5h1v1h-1zM1 6h12v1h-12zM5 7h1v1h-1zM9 7h1v1h-1zM3 8h1v1h-1zM5 8h1v1h-1zM9 8h2v1h-2zM4 9h1v1h-1zM9 9h1v1h-1zM11 9h1v1h-1zM3 10h2v1h-2zM6 10h7v1h-7zM2 11h1v1h-1zM5 11h1v1h-1zM9 11h1v1h-1zM4 12h2v1h-2zM9 12h1v1h-1zM3 13h1v1h-1zM5 13h1v1h-1zM8 13h1v1h-1zM10 13h1v1h-1zM2 14h1v1h-1zM5 14h1v1h-1zM8 14h1v1h-1zM10 14h1v1h-1zM5 15h1v1h-1zM7 15h1v1h-1zM11 15h1v1h-1zM3 16h2v1h-2zM6 16h1v1h-1zM12 16h1v1h-1zM14 5h6v1h-6zM15 6h1v1h-1zM18 6h1v1h-1zM20 6h5v1h-5zM15 7h1v1h-1zM18 7h1v1h-1zM20 7h1v1h-1zM24 7h1v1h-1zM15 8h4v1h-4zM20 8h1v1h-1zM24 8h1v1h-1zM15 9h1v1h-1zM18 9h1v1h-1zM21 9h1v1h-1zM24 9h1v1h-1zM15 10h1v1h-1zM18 10h1v1h-1zM21 10h1v1h-1zM23 10h1v1h-1zM15 11h4v1h-4zM21 11h1v1h-1zM23 11h1v1h-1zM15 12h1v1h-1zM18 12h1v1h-1zM22 12h1v1h-1zM15 13h1v1h-1zM18 13h2v1h-2zM22 13h1v1h-1zM15 14h4v1h-4zM21 14h1v1h-1zM23 14h1v1h-1zM14 15h2v1h-2zM18 15h1v1h-1zM20 15h1v1h-1zM24 15h1v1h-1zM18 16h2v1h-2zM25 16h1v1h-1zM31 5h2v1h-2zM36 5h2v1h-2zM28 6h3v1h-3zM33 6h3v1h-3zM28 7h1v1h-1zM33 7h1v1h-1zM28 8h4v1h-4zM33 8h1v1h-1zM28 9h1v1h-1zM31 9h1v1h-1zM33 9h6v1h-6zM28 10h1v1h-1zM31 10h1v1h-1zM33 10h1v1h-1zM36 10h1v1h-1zM28 11h4v1h-4zM33 11h1v1h-1zM36 11h1v1h-1zM28 12h1v1h-1zM33 12h1v1h-1zM36 12h1v1h-1zM28 13h1v1h-1zM33 13h1v1h-1zM36 13h1v1h-1zM28 14h1v1h-1zM33 14h1v1h-1zM36 14h1v1h-1zM28 15h1v1h-1zM32 15h1v1h-1zM36 15h1v1h-1zM27 16h1v1h-1zM31 16h1v1h-1zM36 16h1v1h-1zM45 5h1v1h-1zM45 6h1v1h-1zM40 7h12v1h-12zM44 8h1v1h-1zM43 9h7v1h-7zM42 10h1v1h-1zM44 10h1v1h-1zM49 10h1v1h-1zM41 11h1v1h-1zM44 11h6v1h-6zM40 12h1v1h-1zM44 12h1v1h-1zM49 12h1v1h-1zM44 13h6v1h-6zM44 14h1v1h-1zM49 14h1v1h-1zM44 15h1v1h-1zM49 15h1v1h-1zM44 16h1v1h-1zM48 16h2v1h-2zM54 5h1v1h-1zM59 5h1v1h-1zM62 5h1v1h-1zM55 6h1v1h-1zM59 6h1v1h-1zM62 6h1v1h-1zM55 7h1v1h-1zM57 7h8v1h-8zM59 8h1v1h-1zM62 8h1v1h-1zM59 9h1v1h-1zM62 9h1v1h-1zM53 10h3v1h-3zM57 10h8v1h-8zM55 11h1v1h-1zM59 11h1v1h-1zM62 11h1v1h-1zM55 12h1v1h-1zM59 12h1v1h-1zM62 12h1v1h-1zM55 13h1v1h-1zM58 13h1v1h-1zM62 13h1v1h-1zM55 14h1v1h-1zM57 14h1v1h-1zM62 14h1v1h-1zM54 15h1v1h-1zM56 15h1v1h-1zM53 16h1v1h-1zM57 16h8v1h-8zM68 5h1v1h-1zM71 5h6v1h-6zM67 6h1v1h-1zM66 7h1v1h-1zM69 8h1v1h-1zM68 9h1v1h-1zM70 9h8v1h-8zM67 10h2v1h-2zM74 10h1v1h-1zM66 11h1v1h-1zM68 11h1v1h-1zM74 11h1v1h-1zM68 12h1v1h-1zM74 12h1v1h-1zM68 13h1v1h-1zM74 13h1v1h-1zM68 14h1v1h-1zM74 14h1v1h-1zM68 15h1v1h-1zM72 15h1v1h-1zM74 15h1v1h-1zM68 16h1v1h-1zM73 16h1v1h-1zM84 5h1v1h-1zM84 6h1v1h-1zM80 7h10v1h-10zM80 8h1v1h-1zM84 8h1v1h-1zM89 8h1v1h-1zM80 9h1v1h-1zM84 9h1v1h-1zM89 9h1v1h-1zM80 10h1v1h-1zM84 10h1v1h-1zM89 10h1v1h-1zM80 11h10v1h-10zM80 12h1v1h-1zM84 12h1v1h-1zM89 12h1v1h-1zM84 13h1v1h-1zM84 14h1v1h-1zM84 15h1v1h-1zM84 16h1v1h-1zM95 5h1v1h-1zM99 5h1v1h-1zM94 6h1v1h-1zM99 6h1v1h-1zM93 7h4v1h-4zM99 7h4v1h-4zM93 8h1v1h-1zM96 8h1v1h-1zM98 8h1v1h-1zM102 8h1v1h-1zM93 9h1v1h-1zM96 9h2v1h-2zM102 9h1v1h-1zM93 10h1v1h-1zM96 10h1v1h-1zM99 10h1v1h-1zM102 10h1v1h-1zM93 11h4v1h-4zM100 11h1v1h-1zM102 11h1v1h-1zM93 12h1v1h-1zM96 12h1v1h-1zM100 12h1v1h-1zM102 12h1v1h-1zM93 13h1v1h-1zM96 13h1v1h-1zM102 13h1v1h-1zM93 14h1v1h-1zM96 14h1v1h-1zM102 14h1v1h-1zM93 15h4v1h-4zM102 15h1v1h-1zM93 16h1v1h-1zM96 16h1v1h-1zM100 16h2v1h-2zM108 5h1v1h-1zM108 6h1v1h-1zM113 6h3v1h-3zM107 7h1v1h-1zM110 7h3v1h-3zM107 8h1v1h-1zM112 8h1v1h-1zM106 9h2v1h-2zM112 9h1v1h-1zM105 10h1v1h-1zM107 10h1v1h-1zM112 10h1v1h-1zM107 11h1v1h-1zM109 11h8v1h-8zM107 12h1v1h-1zM112 12h1v1h-1zM107 13h1v1h-1zM112 13h1v1h-1zM107 14h1v1h-1zM112 14h1v1h-1zM107 15h1v1h-1zM112 15h1v1h-1zM107 16h1v1h-1zM109 16h8v1h-8zM122 5h1v1h-1zM121 6h7v1h-7zM121 7h1v1h-1zM126 7h1v1h-1zM120 8h1v1h-1zM122 8h1v1h-1zM125 8h1v1h-1zM123 9h2v1h-2zM121 10h2v1h-2zM125 10h2v1h-2zM118 11h3v1h-3zM123 11h1v1h-1zM127 11h3v1h-3zM120 12h8v1h-8zM123 13h1v1h-1zM127 13h1v1h-1zM122 14h1v1h-1zM127 14h1v1h-1zM121 15h1v1h-1zM125 15h1v1h-1zM127 15h1v1h-1zM120 16h1v1h-1zM126 16h1v1h-1z" fill="#6A8759"/></svg>
<div class="code" style="left:707px;top:230px;color:#6A8759">&quot;</div>
<div class="code" style="left:715px;top:230px;color:#A9B7C6">)</div>
<svg style="left:0;top:0" width="1" height="1"><path d="M455.5 236.5h8v6.5l-4 4l-4 -4z" fill="#313335" stroke="#5F6060"/><path d="M457.5 240.5h4" fill="none" stroke="#5F6060"/></svg>
<div class="code" style="left:497px;top:252px;color:#BBB529">@GetMapping</div>
<div class="code" style="left:585px;top:252px;color:#A9B7C6">(</div>
<svg style="left:0;top:0" width="1" height="1"><rect x="593" y="256" width="21" height="12" rx="4" fill="#3B3B3B"/><circle cx="599.0" cy="262.0" r="5" fill="#8E9295"/><path d="M596.9 258.6q2.6 -1 5 1.4q0.5 2.2 -0.7 3.8q-1.9 -0.2 -1.9 -1.7q-1 -0.4 -1.4 -1.5z" fill="#3B3B3B"/><path d="M595.3 262.0q0.7 2 2.4 2.7" fill="none" stroke="#3B3B3B" stroke-width="1.2"/><path d="M606.5 260.5l3 3l3 -3" fill="none" stroke="#7F8386" stroke-width="1.1"/></svg>
<div class="code" style="left:614px;top:252px;color:#6A8759">&quot;</div>
<div class="code" style="left:622px;top:252px;color:#6A8759">/task/all</div>
<div class="a" style="left:622px;top:269px;width:72px;height:1px;background:#7D8799"></div>
<div class="code" style="left:694px;top:252px;color:#6A8759">&quot;</div>
<div class="code" style="left:702px;top:252px;color:#A9B7C6">)</div>
<svg style="left:0;top:0" width="1" height="1"><path d="M455.5 266.5v-6l4 -4l4 4v6z" fill="#313335" stroke="#5F6060"/><path d="M457.5 263.5h4" fill="none" stroke="#5F6060"/></svg>
<div class="code" style="left:497px;top:274px;color:#CC7832">public </div>
<div class="code" style="left:553px;top:274px;color:#A9B7C6">RspBase&lt;List&lt;Map&lt;String</div>
<div class="code" style="left:737px;top:274px;color:#CC7832">, </div>
<div class="code" style="left:753px;top:274px;color:#A9B7C6">Object&gt;&gt;&gt; </div>
<div class="code" style="left:833px;top:274px;color:#FFC66D">queryTaskAll</div>
<div class="code" style="left:929px;top:274px;color:#A9B7C6">() </div>
<div class="a" style="left:953px;top:273px;width:40px;height:22px;background:#3A3A3A"></div>
<div class="code" style="left:953px;top:274px;color:#A9B7C6">{...}</div>
<svg style="left:0;top:0" width="1" height="1"><path d="M455.5 280.5h8v8h-8z" fill="#313335" stroke="#5F6060"/><path d="M457.5 284.5h4M459.5 282.5v4" fill="none" stroke="#5F6060"/></svg>
<svg style="left:0;top:0" width="1" height="1"><circle cx="419.5" cy="283.5" r="6.6" fill="#58A23D"/><path d="M414.5 279.0L421 285.0" stroke="#313335" stroke-width="1.3"/><circle cx="423" cy="286.5" r="5.2" fill="#313335"/><circle cx="423" cy="286.5" r="4.1" fill="#AEB4B8"/><path d="M421.2 283.3q2.2 -0.8 4.2 1.2q0.4 1.8 -0.6 3.2q-1.6 -0.2 -1.6 -1.4q-0.8 -0.3 -1.2 -1.2z" fill="#313335"/><path d="M419.6 286.2q0.6 1.6 2 2.2" fill="none" stroke="#313335" stroke-width="1"/></svg>
<div class="code" style="left:497px;top:318px;color:#BBB529">@APIDesc</div>
<div class="code" style="left:561px;top:318px;color:#A9B7C6">(</div>
<div class="code" style="left:569px;top:318px;color:#6A8759">&quot;</div>
<svg style="left:577px;top:317px" width="143" height="22" shape-rendering="crispEdges"><path d="M5 5h1v1h-1zM9 5h1v1h-1zM1 6h12v1h-12zM5 7h1v1h-1zM9 7h1v1h-1zM3 8h1v1h-1zM5 8h1v1h-1zM9 8h2v1h-2zM4 9h1v1h-1zM9 9h1v1h-1zM11 9h1v1h-1zM3 10h2v1h-2zM6 10h7v1h-7zM2 11h1v1h-1zM5 11h1v1h-1zM9 11h1v1h-1zM4 12h2v1h-2zM9 12h1v1h-1zM3 13h1v1h-1zM5 13h1v1h-1zM8 13h1v1h-1zM10 13h1v1h-1zM2 14h1v1h-1zM5 14h1v1h-1zM8 14h1v1h-1zM10 14h1v1h-1zM5 15h1v1h-1zM7 15h1v1h-1zM11 15h1v1h-1zM3 16h2v1h-2zM6 16h1v1h-1zM12 16h1v1h-1zM14 5h6v1h-6zM15 6h1v1h-1zM18 6h1v1h-1zM20 6h5v1h-5zM15 7h1v1h-1zM18 7h1v1h-1zM20 7h1v1h-1zM24 7h1v1h-1zM15 8h4v1h-4zM20 8h1v1h-1zM24 8h1v1h-1zM15 9h1v1h-1zM18 9h1v1h-1zM21 9h1v1h-1zM24 9h1v1h-1zM15 10h1v1h-1zM18 10h1v1h-1zM21 10h1v1h-1zM23 10h1v1h-1zM15 11h4v1h-4zM21 11h1v1h-1zM23 11h1v1h-1zM15 12h1v1h-1zM18 12h1v1h-1zM22 12h1v1h-1zM15 13h1v1h-1zM18 13h2v1h-2zM22 13h1v1h-1zM15 14h4v1h-4zM21 14h1v1h-1zM23 14h1v1h-1zM14 15h2v1h-2zM18 15h1v1h-1zM20 15h1v1h-1zM24 15h1v1h-1zM18 16h2v1h-2zM25 16h1v1h-1zM29 5h1v1h-1zM33 5h1v1h-1zM29 6h1v1h-1zM33 6h1v1h-1zM36 6h2v1h-2zM29 7h1v1h-1zM33 7h3v1h-3zM27 8h5v1h-5zM33 8h1v1h-1zM38 8h1v1h-1zM29 9h1v1h-1zM33 9h6v1h-6zM29 10h1v1h-1zM29 11h2v1h-2zM33 11h5v1h-5zM27 12h3v1h-3zM33 12h1v1h-1zM37 12h1v1h-1zM29 13h1v1h-1zM33 13h5v1h-5zM29 14h1v1h-1zM33 14h1v1h-1zM37 14h1v1h-1zM27 15h1v1h-1zM29 15h1v1h-1zM33 15h1v1h-1zM37 15h1v1h-1zM28 16h1v1h-1zM33 16h5v1h-5zM45 5h1v1h-1zM46 6h1v1h-1zM41 7h11v1h-11zM41 8h1v1h-1zM51 8h1v1h-1zM40 9h1v1h-1zM42 9h8v1h-8zM46 10h1v1h-1zM43 11h1v1h-1zM46 11h1v1h-1zM43 12h1v1h-1zM46 12h4v1h-4zM43 13h1v1h-1zM46 13h1v1h-1zM42 14h1v1h-1zM44 14h1v1h-1zM46 14h1v1h-1zM41 15h1v1h-1zM45 15h2v1h-2zM40 16h1v1h-1zM46 16h6v1h-6zM56 5h1v1h-1zM59 5h4v1h-4zM56 6h1v1h-1zM62 6h1v1h-1zM55 7h1v1h-1zM57 7h8v1h-8zM55 8h1v1h-1zM57 8h1v1h-1zM59 8h1v1h-1zM54 9h2v1h-2zM57 9h1v1h-1zM59 9h5v1h-5zM53 10h1v1h-1zM55 10h1v1h-1zM57 10h2v1h-2zM61 10h1v1h-1zM55 11h1v1h-1zM57 11h1v1h-1zM61 11h1v1h-1zM55 12h1v1h-1zM57 12h8v1h-8zM55 13h1v1h-1zM57 13h1v1h-1zM61 13h1v1h-1zM55 14h1v1h-1zM57 14h1v1h-1zM60 14h1v1h-1zM62 14h1v1h-1zM55 15h1v1h-1zM59 15h1v1h-1zM63 15h1v1h-1zM55 16h1v1h-1zM58 16h1v1h-1zM64 16h1v1h-1zM67 5h1v1h-1zM71 5h1v1h-1zM73 5h1v1h-1zM68 6h1v1h-1zM71 6h1v1h-1zM73 6h1v1h-1zM68 7h1v1h-1zM71 7h6v1h-6zM70 8h1v1h-1zM73 8h1v1h-1zM73 9h1v1h-1zM66 10h3v1h-3zM70 10h8v1h-8zM68 11h1v1h-1zM72 11h1v1h-1zM74 11h1v1h-1zM68 12h1v1h-1zM72 12h1v1h-1zM74 12h1v1h-1zM77 12h1v1h-1zM68 13h1v1h-1zM71 13h1v1h-1zM74 13h1v1h-1zM77 13h1v1h-1zM68 14h1v1h-1zM70 14h1v1h-1zM75 14h3v1h-3zM67 15h1v1h-1zM69 15h1v1h-1zM66 16h1v1h-1zM70 16h8v1h-8zM81 5h1v1h-1zM85 5h5v1h-5zM81 6h1v1h-1zM85 6h1v1h-1zM89 6h1v1h-1zM80 7h1v1h-1zM85 7h1v1h-1zM89 7h1v1h-1zM80 8h1v1h-1zM82 8h1v1h-1zM85 8h1v1h-1zM89 8h1v1h-1zM79 9h3v1h-3zM85 9h5v1h-5zM81 10h1v1h-1zM85 10h1v1h-1zM89 10h1v1h-1zM80 11h1v1h-1zM82 11h1v1h-1zM85 11h1v1h-1zM89 11h1v1h-1zM79 12h3v1h-3zM85 12h5v1h-5zM85 13h1v1h-1zM89 13h1v1h-1zM81 14h2v1h-2zM85 14h1v1h-1zM89 14h1v1h-1zM79 15h2v1h-2zM85 15h1v1h-1zM89 15h1v1h-1zM83 16h8v1h-8zM92 5h12v1h-12zM97 6h1v1h-1zM97 7h1v1h-1zM97 8h2v1h-2zM97 9h1v1h-1zM99 9h1v1h-1zM97 10h1v1h-1zM100 10h2v1h-2zM97 11h1v1h-1zM101 11h1v1h-1zM97 12h1v1h-1zM97 13h1v1h-1zM97 14h1v1h-1zM97 15h1v1h-1zM97 16h1v1h-1zM108 5h1v1h-1zM112 5h1v1h-1zM107 6h1v1h-1zM112 6h1v1h-1zM106 7h4v1h-4zM112 7h4v1h-4zM106 8h1v1h-1zM109 8h1v1h-1zM111 8h1v1h-1zM115 8h1v1h-1zM106 9h1v1h-1zM109 9h2v1h-2zM115 9h1v1h-1zM106 10h1v1h-1zM109 10h1v1h-1zM112 10h1v1h-1zM115 10h1v1h-1zM106 11h4v1h-4zM113 11h1v1h-1zM115 11h1v1h-1zM106 12h1v1h-1zM109 12h1v1h-1zM113 12h1v1h-1zM115 12h1v1h-1zM106 13h1v1h-1zM109 13h1v1h-1zM115 13h1v1h-1zM106 14h1v1h-1zM109 14h1v1h-1zM115 14h1v1h-1zM106 15h4v1h-4zM115 15h1v1h-1zM106 16h1v1h-1zM109 16h1v1h-1zM113 16h2v1h-2zM121 5h1v1h-1zM121 6h1v1h-1zM126 6h3v1h-3zM120 7h1v1h-1zM123 7h3v1h-3zM120 8h1v1h-1zM125 8h1v1h-1zM119 9h2v1h-2zM125 9h1v1h-1zM118 10h1v1h-1zM120 10h1v1h-1zM125 10h1v1h-1zM120 11h1v1h-1zM122 11h8v1h-8zM120 12h1v1h-1zM125 12h1v1h-1zM120 13h1v1h-1zM125 13h1v1h-1zM120 14h1v1h-1zM125 14h1v1h-1zM120 15h1v1h-1zM125 15h1v1h-1zM120 16h1v1h-1zM122 16h8v1h-8zM135 5h1v1h-1zM134 6h7v1h-7zM134 7h1v1h-1zM139 7h1v1h-1zM133 8h1v1h-1zM135 8h1v1h-1zM138 8h1v1h-1zM136 9h2v1h-2zM134 10h2v1h-2zM138 10h2v1h-2zM131 11h3v1h-3zM136 11h1v1h-1zM140 11h3v1h-3zM133 12h8v1h-8zM136 13h1v1h-1zM140 13h1v1h-1zM135 14h1v1h-1zM140 14h1v1h-1zM134 15h1v1h-1zM138 15h1v1h-1zM140 15h1v1h-1zM133 16h1v1h-1zM139 16h1v1h-1z" fill="#6A8759"/></svg>
<div class="code" style="left:720px;top:318px;color:#6A8759"> a:</div>
<svg style="left:744px;top:317px" width="26" height="22" shape-rendering="crispEdges"><path d="M4 5h1v1h-1zM9 5h4v1h-4zM1 6h7v1h-7zM9 6h1v1h-1zM12 6h1v1h-1zM9 7h1v1h-1zM12 7h1v1h-1zM2 8h1v1h-1zM6 8h1v1h-1zM9 8h1v1h-1zM11 8h1v1h-1zM3 9h1v1h-1zM5 9h1v1h-1zM9 9h2v1h-2zM1 10h7v1h-7zM9 10h1v1h-1zM11 10h1v1h-1zM9 11h1v1h-1zM12 11h1v1h-1zM2 12h5v1h-5zM9 12h1v1h-1zM12 12h1v1h-1zM2 13h1v1h-1zM6 13h1v1h-1zM9 13h2v1h-2zM12 13h1v1h-1zM2 14h1v1h-1zM6 14h1v1h-1zM9 14h1v1h-1zM11 14h1v1h-1zM2 15h5v1h-5zM9 15h1v1h-1zM2 16h1v1h-1zM6 16h1v1h-1zM9 16h1v1h-1zM15 5h1v1h-1zM16 6h1v1h-1zM19 6h6v1h-6zM24 7h1v1h-1zM15 8h1v1h-1zM24 8h1v1h-1zM15 9h1v1h-1zM24 9h1v1h-1zM15 10h1v1h-1zM24 10h1v1h-1zM15 11h1v1h-1zM24 11h1v1h-1zM15 12h1v1h-1zM24 12h1v1h-1zM15 13h1v1h-1zM24 13h1v1h-1zM15 14h1v1h-1zM24 14h1v1h-1zM15 15h1v1h-1zM22 15h1v1h-1zM24 15h1v1h-1zM15 16h1v1h-1zM23 16h1v1h-1z" fill="#6A8759"/></svg>
<div class="code" style="left:770px;top:318px;color:#6A8759"> b:</div>
<svg style="left:794px;top:317px" width="26" height="22" shape-rendering="crispEdges"><path d="M6 5h1v1h-1zM6 6h1v1h-1zM11 6h1v1h-1zM3 7h8v1h-8zM6 8h1v1h-1zM9 8h1v1h-1zM1 9h12v1h-12zM7 10h1v1h-1zM5 11h2v1h-2zM4 12h2v1h-2zM9 12h2v1h-2zM3 13h1v1h-1zM5 13h1v1h-1zM7 13h2v1h-2zM1 14h2v1h-2zM5 14h2v1h-2zM11 14h1v1h-1zM5 15h1v1h-1zM11 15h1v1h-1zM6 16h6v1h-6zM16 5h1v1h-1zM23 5h2v1h-2zM16 6h1v1h-1zM20 6h3v1h-3zM16 7h1v1h-1zM20 7h1v1h-1zM14 8h5v1h-5zM20 8h1v1h-1zM16 9h1v1h-1zM20 9h5v1h-5zM15 10h3v1h-3zM20 10h1v1h-1zM24 10h1v1h-1zM15 11h2v1h-2zM18 11h1v1h-1zM20 11h2v1h-2zM24 11h1v1h-1zM14 12h1v1h-1zM16 12h1v1h-1zM20 12h1v1h-1zM22 12h1v1h-1zM24 12h1v1h-1zM14 13h1v1h-1zM16 13h1v1h-1zM20 13h1v1h-1zM23 13h1v1h-1zM16 14h1v1h-1zM19 14h1v1h-1zM23 14h1v1h-1zM16 15h1v1h-1zM19 15h1v1h-1zM22 15h1v1h-1zM24 15h1v1h-1zM16 16h1v1h-1zM18 16h1v1h-1zM20 16h2v1h-2zM25 16h1v1h-1z" fill="#6A8759"/></svg>
<div class="code" style="left:820px;top:318px;color:#6A8759">&quot;</div>
<div class="code" style="left:828px;top:318px;color:#A9B7C6">)</div>
<svg style="left:0;top:0" width="1" height="1"><path d="M455.5 324.5h8v6.5l-4 4l-4 -4z" fill="#313335" stroke="#5F6060"/><path d="M457.5 328.5h4" fill="none" stroke="#5F6060"/></svg>
<div class="code" style="left:497px;top:340px;color:#BBB529">@GetMapping</div>
<div class="code" style="left:585px;top:340px;color:#A9B7C6">(</div>
<svg style="left:0;top:0" width="1" height="1"><rect x="593" y="344" width="21" height="12" rx="4" fill="#3B3B3B"/><circle cx="599.0" cy="350.0" r="5" fill="#8E9295"/><path d="M596.9 346.6q2.6 -1 5 1.4q0.5 2.2 -0.7 3.8q-1.9 -0.2 -1.9 -1.7q-1 -0.4 -1.4 -1.5z" fill="#3B3B3B"/><path d="M595.3 350.0q0.7 2 2.4 2.7" fill="none" stroke="#3B3B3B" stroke-width="1.2"/><path d="M606.5 348.5l3 3l3 -3" fill="none" stroke="#7F8386" stroke-width="1.1"/></svg>
<div class="code" style="left:614px;top:340px;color:#6A8759">&quot;</div>
<div class="code" style="left:622px;top:340px;color:#6A8759">/candidate/group</div>
<div class="a" style="left:622px;top:357px;width:128px;height:1px;background:#7D8799"></div>
<div class="code" style="left:750px;top:340px;color:#6A8759">&quot;</div>
<div class="code" style="left:758px;top:340px;color:#A9B7C6">)</div>
<svg style="left:0;top:0" width="1" height="1"><path d="M455.5 354.5v-6l4 -4l4 4v6z" fill="#313335" stroke="#5F6060"/><path d="M457.5 351.5h4" fill="none" stroke="#5F6060"/></svg>
<div class="code" style="left:497px;top:362px;color:#CC7832">public </div>
<div class="code" style="left:553px;top:362px;color:#A9B7C6">RspBase&lt;List&lt;Map&lt;String</div>
<div class="code" style="left:737px;top:362px;color:#CC7832">, </div>
<div class="code" style="left:753px;top:362px;color:#A9B7C6">Object&gt;&gt;&gt; </div>
<div class="code" style="left:833px;top:362px;color:#FFC66D">queryCandidateGroupTask</div>
<div class="code" style="left:1017px;top:362px;color:#A9B7C6">(</div>
<div class="code" style="left:1025px;top:362px;color:#BBB529">@RequestParam </div>
<div class="code" style="left:1137px;top:362px;color:#A9B7C6">String candidateGroup) </div>
<div class="a" style="left:1321px;top:361px;width:40px;height:22px;background:#3A3A3A"></div>
<div class="code" style="left:1321px;top:362px;color:#A9B7C6">{...}</div>
<svg style="left:0;top:0" width="1" height="1"><path d="M455.5 368.5h8v8h-8z" fill="#313335" stroke="#5F6060"/><path d="M457.5 372.5h4M459.5 370.5v4" fill="none" stroke="#5F6060"/></svg>
<svg style="left:0;top:0" width="1" height="1"><circle cx="419.5" cy="371.5" r="6.6" fill="#58A23D"/><path d="M414.5 367.0L421 373.0" stroke="#313335" stroke-width="1.3"/><circle cx="423" cy="374.5" r="5.2" fill="#313335"/><circle cx="423" cy="374.5" r="4.1" fill="#AEB4B8"/><path d="M421.2 371.3q2.2 -0.8 4.2 1.2q0.4 1.8 -0.6 3.2q-1.6 -0.2 -1.6 -1.4q-0.8 -0.3 -1.2 -1.2z" fill="#313335"/><path d="M419.6 374.2q0.6 1.6 2 2.2" fill="none" stroke="#313335" stroke-width="1"/></svg>
<div class="code" style="left:497px;top:406px;color:#BBB529">@APIDesc</div>
<div class="code" style="left:561px;top:406px;color:#A9B7C6">(</div>
<div class="code" style="left:569px;top:406px;color:#6A8759">&quot;</div>
<svg style="left:577px;top:405px" width="52" height="22" shape-rendering="crispEdges"><path d="M5 5h1v1h-1zM9 5h1v1h-1zM1 6h12v1h-12zM5 7h1v1h-1zM9 7h1v1h-1zM2 9h10v1h-10zM6 10h1v1h-1zM11 10h1v1h-1zM6 11h1v1h-1zM11 11h1v1h-1zM6 12h1v1h-1zM11 12h1v1h-1zM6 13h1v1h-1zM11 13h1v1h-1zM6 14h1v1h-1zM9 14h2v1h-2zM6 15h1v1h-1zM6 16h1v1h-1zM19 5h1v1h-1zM19 6h5v1h-5zM19 7h1v1h-1zM19 8h1v1h-1zM16 9h7v1h-7zM16 10h1v1h-1zM22 10h1v1h-1zM16 11h1v1h-1zM22 11h1v1h-1zM16 12h7v1h-7zM15 14h1v1h-1zM17 14h1v1h-1zM20 14h1v1h-1zM23 14h1v1h-1zM15 15h1v1h-1zM18 15h1v1h-1zM21 15h1v1h-1zM24 15h1v1h-1zM14 16h1v1h-1zM18 16h1v1h-1zM21 16h1v1h-1zM24 16h1v1h-1zM33 5h1v1h-1zM27 6h12v1h-12zM27 7h1v1h-1zM38 7h1v1h-1zM27 8h1v1h-1zM33 8h1v1h-1zM38 8h1v1h-1zM29 9h9v1h-9zM29 10h1v1h-1zM33 10h1v1h-1zM37 10h1v1h-1zM29 11h9v1h-9zM29 12h1v1h-1zM33 12h1v1h-1zM37 12h1v1h-1zM29 13h9v1h-9zM29 14h1v1h-1zM33 14h1v1h-1zM37 14h1v1h-1zM33 15h1v1h-1zM33 16h1v1h-1zM42 5h1v1h-1zM48 5h1v1h-1zM42 6h1v1h-1zM45 6h1v1h-1zM48 6h1v1h-1zM42 7h1v1h-1zM45 7h1v1h-1zM48 7h1v1h-1zM40 8h6v1h-6zM48 8h1v1h-1zM51 8h1v1h-1zM42 9h1v1h-1zM45 9h4v1h-4zM50 9h1v1h-1zM42 10h1v1h-1zM45 10h1v1h-1zM48 10h2v1h-2zM42 11h2v1h-2zM45 11h1v1h-1zM48 11h1v1h-1zM40 12h3v1h-3zM45 12h1v1h-1zM48 12h1v1h-1zM42 13h1v1h-1zM45 13h1v1h-1zM48 13h1v1h-1zM42 14h1v1h-1zM45 14h1v1h-1zM47 14h2v1h-2zM51 14h1v1h-1zM40 15h1v1h-1zM42 15h1v1h-1zM45 15h2v1h-2zM48 15h1v1h-1zM51 15h1v1h-1zM41 16h1v1h-1zM45 16h1v1h-1zM49 16h3v1h-3z" fill="#6A8759"/></svg>
<div class="code" style="left:629px;top:406px;color:#6A8759"> candidateGroup: a</div>
<svg style="left:773px;top:405px" width="26" height="22" shape-rendering="crispEdges"><path d="M4 5h1v1h-1zM9 5h4v1h-4zM1 6h7v1h-7zM9 6h1v1h-1zM12 6h1v1h-1zM9 7h1v1h-1zM12 7h1v1h-1zM2 8h1v1h-1zM6 8h1v1h-1zM9 8h1v1h-1zM11 8h1v1h-1zM3 9h1v1h-1zM5 9h1v1h-1zM9 9h2v1h-2zM1 10h7v1h-7zM9 10h1v1h-1zM11 10h1v1h-1zM9 11h1v1h-1zM12 11h1v1h-1zM2 12h5v1h-5zM9 12h1v1h-1zM12 12h1v1h-1zM2 13h1v1h-1zM6 13h1v1h-1zM9 13h2v1h-2zM12 13h1v1h-1zM2 14h1v1h-1zM6 14h1v1h-1zM9 14h1v1h-1zM11 14h1v1h-1zM2 15h5v1h-5zM9 15h1v1h-1zM2 16h1v1h-1zM6 16h1v1h-1zM9 16h1v1h-1zM15 5h1v1h-1zM16 6h1v1h-1zM19 6h6v1h-6zM24 7h1v1h-1zM15 8h1v1h-1zM24 8h1v1h-1zM15 9h1v1h-1zM24 9h1v1h-1zM15 10h1v1h-1zM24 10h1v1h-1zM15 11h1v1h-1zM24 11h1v1h-1zM15 12h1v1h-1zM24 12h1v1h-1zM15 13h1v1h-1zM24 13h1v1h-1zM15 14h1v1h-1zM24 14h1v1h-1zM15 15h1v1h-1zM22 15h1v1h-1zM24 15h1v1h-1zM15 16h1v1h-1zM23 16h1v1h-1z" fill="#6A8759"/></svg>
<div class="code" style="left:799px;top:406px;color:#6A8759"> b</div>
<svg style="left:815px;top:405px" width="26" height="22" shape-rendering="crispEdges"><path d="M6 5h1v1h-1zM6 6h1v1h-1zM11 6h1v1h-1zM3 7h8v1h-8zM6 8h1v1h-1zM9 8h1v1h-1zM1 9h12v1h-12zM7 10h1v1h-1zM5 11h2v1h-2zM4 12h2v1h-2zM9 12h2v1h-2zM3 13h1v1h-1zM5 13h1v1h-1zM7 13h2v1h-2zM1 14h2v1h-2zM5 14h2v1h-2zM11 14h1v1h-1zM5 15h1v1h-1zM11 15h1v1h-1zM6 16h6v1h-6zM16 5h1v1h-1zM23 5h2v1h-2zM16 6h1v1h-1zM20 6h3v1h-3zM16 7h1v1h-1zM20 7h1v1h-1zM14 8h5v1h-5zM20 8h1v1h-1zM16 9h1v1h-1zM20 9h5v1h-5zM15 10h3v1h-3zM20 10h1v1h-1zM24 10h1v1h-1zM15 11h2v1h-2zM18 11h1v1h-1zM20 11h2v1h-2zM24 11h1v1h-1zM14 12h1v1h-1zM16 12h1v1h-1zM20 12h1v1h-1zM22 12h1v1h-1zM24 12h1v1h-1zM14 13h1v1h-1zM16 13h1v1h-1zM20 13h1v1h-1zM23 13h1v1h-1zM16 14h1v1h-1zM19 14h1v1h-1zM23 14h1v1h-1zM16 15h1v1h-1zM19 15h1v1h-1zM22 15h1v1h-1zM24 15h1v1h-1zM16 16h1v1h-1zM18 16h1v1h-1zM20 16h2v1h-2zM25 16h1v1h-1z" fill="#6A8759"/></svg>
<div class="code" style="left:841px;top:406px;color:#6A8759"> | completeVariableKey: deptPass</div>
<svg style="left:1097px;top:405px" width="130" height="22" shape-rendering="crispEdges"><path d="M4 5h1v1h-1zM9 5h4v1h-4zM1 6h7v1h-7zM9 6h1v1h-1zM12 6h1v1h-1zM9 7h1v1h-1zM12 7h1v1h-1zM2 8h1v1h-1zM6 8h1v1h-1zM9 8h1v1h-1zM11 8h1v1h-1zM3 9h1v1h-1zM5 9h1v1h-1zM9 9h2v1h-2zM1 10h7v1h-7zM9 10h1v1h-1zM11 10h1v1h-1zM9 11h1v1h-1zM12 11h1v1h-1zM2 12h5v1h-5zM9 12h1v1h-1zM12 12h1v1h-1zM2 13h1v1h-1zM6 13h1v1h-1zM9 13h2v1h-2zM12 13h1v1h-1zM2 14h1v1h-1zM6 14h1v1h-1zM9 14h1v1h-1zM11 14h1v1h-1zM2 15h5v1h-5zM9 15h1v1h-1zM2 16h1v1h-1zM6 16h1v1h-1zM9 16h1v1h-1zM15 5h1v1h-1zM16 6h1v1h-1zM19 6h6v1h-6zM24 7h1v1h-1zM15 8h1v1h-1zM24 8h1v1h-1zM15 9h1v1h-1zM24 9h1v1h-1zM15 10h1v1h-1zM24 10h1v1h-1zM15 11h1v1h-1zM24 11h1v1h-1zM15 12h1v1h-1zM24 12h1v1h-1zM15 13h1v1h-1zM24 13h1v1h-1zM15 14h1v1h-1zM24 14h1v1h-1zM15 15h1v1h-1zM22 15h1v1h-1zM24 15h1v1h-1zM15 16h1v1h-1zM23 16h1v1h-1zM33 5h1v1h-1zM27 6h12v1h-12zM27 7h1v1h-1zM38 7h1v1h-1zM27 8h1v1h-1zM33 8h1v1h-1zM38 8h1v1h-1zM29 9h9v1h-9zM29 10h1v1h-1zM33 10h1v1h-1zM37 10h1v1h-1zM29 11h9v1h-9zM29 12h1v1h-1zM33 12h1v1h-1zM37 12h1v1h-1zM29 13h9v1h-9zM29 14h1v1h-1zM33 14h1v1h-1zM37 14h1v1h-1zM33 15h1v1h-1zM33 16h1v1h-1zM42 5h1v1h-1zM47 5h1v1h-1zM42 6h1v1h-1zM48 6h1v1h-1zM42 7h1v1h-1zM45 7h7v1h-7zM40 8h5v1h-5zM47 8h1v1h-1zM42 9h1v1h-1zM46 9h1v1h-1zM49 9h1v1h-1zM41 10h3v1h-3zM45 10h4v1h-4zM41 11h2v1h-2zM44 11h1v1h-1zM48 11h1v1h-1zM40 12h1v1h-1zM42 12h1v1h-1zM47 12h1v1h-1zM50 12h1v1h-1zM42 13h1v1h-1zM45 13h2v1h-2zM49 13h1v1h-1zM42 14h1v1h-1zM48 14h2v1h-2zM42 15h1v1h-1zM46 15h2v1h-2zM50 15h1v1h-1zM42 16h1v1h-1zM44 16h2v1h-2zM51 16h1v1h-1zM62 5h1v1h-1zM53 6h4v1h-4zM62 6h1v1h-1zM53 7h1v1h-1zM56 7h1v1h-1zM62 7h1v1h-1zM53 8h1v1h-1zM56 8h9v1h-9zM53 9h1v1h-1zM56 9h1v1h-1zM62 9h1v1h-1zM53 10h4v1h-4zM58 10h1v1h-1zM62 10h1v1h-1zM53 11h1v1h-1zM56 11h1v1h-1zM59 11h1v1h-1zM62 11h1v1h-1zM53 12h1v1h-1zM56 12h1v1h-1zM59 12h1v1h-1zM62 12h1v1h-1zM53 13h1v1h-1zM56 13h1v1h-1zM62 13h1v1h-1zM53 14h4v1h-4zM62 14h1v1h-1zM53 15h1v1h-1zM56 15h1v1h-1zM60 15h1v1h-1zM62 15h1v1h-1zM61 16h1v1h-1zM68 5h1v1h-1zM72 5h5v1h-5zM68 6h1v1h-1zM72 6h1v1h-1zM76 6h1v1h-1zM68 7h1v1h-1zM72 7h5v1h-5zM66 8h5v1h-5zM72 8h1v1h-1zM76 8h1v1h-1zM68 9h1v1h-1zM72 9h5v1h-5zM68 10h1v1h-1zM68 11h2v1h-2zM71 11h7v1h-7zM66 12h3v1h-3zM74 12h1v1h-1zM68 13h1v1h-1zM72 13h1v1h-1zM74 13h3v1h-3zM68 14h1v1h-1zM72 14h1v1h-1zM74 14h1v1h-1zM66 15h1v1h-1zM68 15h1v1h-1zM71 15h1v1h-1zM73 15h2v1h-2zM67 16h1v1h-1zM70 16h1v1h-1zM74 16h4v1h-4zM83 5h1v1h-1zM84 6h1v1h-1zM79 7h11v1h-11zM82 8h1v1h-1zM86 8h1v1h-1zM81 9h1v1h-1zM87 9h1v1h-1zM80 10h1v1h-1zM82 10h1v1h-1zM86 10h1v1h-1zM88 10h1v1h-1zM79 11h1v1h-1zM82 11h1v1h-1zM86 11h1v1h-1zM83 12h1v1h-1zM85 12h1v1h-1zM84 13h1v1h-1zM83 14h1v1h-1zM85 14h1v1h-1zM81 15h2v1h-2zM86 15h2v1h-2zM79 16h2v1h-2zM88 16h2v1h-2zM95 5h1v1h-1zM99 5h1v1h-1zM94 6h1v1h-1zM99 6h1v1h-1zM93 7h4v1h-4zM99 7h4v1h-4zM93 8h1v1h-1zM96 8h1v1h-1zM98 8h1v1h-1zM102 8h1v1h-1zM93 9h1v1h-1zM96 9h2v1h-2zM102 9h1v1h-1zM93 10h1v1h-1zM96 10h1v1h-1zM99 10h1v1h-1zM102 10h1v1h-1zM93 11h4v1h-4zM100 11h1v1h-1zM102 11h1v1h-1zM93 12h1v1h-1zM96 12h1v1h-1zM100 12h1v1h-1zM102 12h1v1h-1zM93 13h1v1h-1zM96 13h1v1h-1zM102 13h1v1h-1zM93 14h1v1h-1zM96 14h1v1h-1zM102 14h1v1h-1zM93 15h4v1h-4zM102 15h1v1h-1zM93 16h1v1h-1zM96 16h1v1h-1zM100 16h2v1h-2zM109 5h1v1h-1zM110 6h1v1h-1zM105 7h11v1h-11zM107 8h1v1h-1zM109 8h1v1h-1zM111 8h1v1h-1zM113 8h1v1h-1zM106 9h1v1h-1zM109 9h1v1h-1zM111 9h1v1h-1zM114 9h1v1h-1zM105 10h1v1h-1zM109 10h1v1h-1zM111 10h1v1h-1zM115 10h1v1h-1zM106 11h9v1h-9zM108 12h1v1h-1zM112 12h1v1h-1zM109 13h1v1h-1zM111 13h1v1h-1zM110 14h1v1h-1zM108 15h2v1h-2zM111 15h2v1h-2zM105 16h3v1h-3zM113 16h3v1h-3zM120 5h8v1h-8zM120 6h1v1h-1zM123 6h1v1h-1zM127 6h1v1h-1zM120 7h1v1h-1zM124 7h1v1h-1zM127 7h1v1h-1zM118 8h12v1h-12zM120 9h1v1h-1zM124 9h1v1h-1zM127 9h1v1h-1zM120 10h8v1h-8zM120 11h1v1h-1zM124 11h1v1h-1zM127 11h1v1h-1zM120 12h8v1h-8zM124 13h1v1h-1zM120 14h8v1h-8zM124 15h1v1h-1zM118 16h12v1h-12z" fill="#6A8759"/></svg>
<div class="code" style="left:1227px;top:406px;color:#6A8759"> leaderPass</div>
<svg style="left:1315px;top:405px" width="130" height="22" shape-rendering="crispEdges"><path d="M6 5h1v1h-1zM6 6h1v1h-1zM11 6h1v1h-1zM3 7h8v1h-8zM6 8h1v1h-1zM9 8h1v1h-1zM1 9h12v1h-12zM7 10h1v1h-1zM5 11h2v1h-2zM4 12h2v1h-2zM9 12h2v1h-2zM3 13h1v1h-1zM5 13h1v1h-1zM7 13h2v1h-2zM1 14h2v1h-2zM5 14h2v1h-2zM11 14h1v1h-1zM5 15h1v1h-1zM11 15h1v1h-1zM6 16h6v1h-6zM16 5h1v1h-1zM23 5h2v1h-2zM16 6h1v1h-1zM20 6h3v1h-3zM16 7h1v1h-1zM20 7h1v1h-1zM14 8h5v1h-5zM20 8h1v1h-1zM16 9h1v1h-1zM20 9h5v1h-5zM15 10h3v1h-3zM20 10h1v1h-1zM24 10h1v1h-1zM15 11h2v1h-2zM18 11h1v1h-1zM20 11h2v1h-2zM24 11h1v1h-1zM14 12h1v1h-1zM16 12h1v1h-1zM20 12h1v1h-1zM22 12h1v1h-1zM24 12h1v1h-1zM14 13h1v1h-1zM16 13h1v1h-1zM20 13h1v1h-1zM23 13h1v1h-1zM16 14h1v1h-1zM19 14h1v1h-1zM23 14h1v1h-1zM16 15h1v1h-1zM19 15h1v1h-1zM22 15h1v1h-1zM24 15h1v1h-1zM16 16h1v1h-1zM18 16h1v1h-1zM20 16h2v1h-2zM25 16h1v1h-1zM33 5h1v1h-1zM27 6h12v1h-12zM27 7h1v1h-1zM38 7h1v1h-1zM27 8h1v1h-1zM33 8h1v1h-1zM38 8h1v1h-1zM29 9h9v1h-9zM29 10h1v1h-1zM33 10h1v1h-1zM37 10h1v1h-1zM29 11h9v1h-9zM29 12h1v1h-1zM33 12h1v1h-1zM37 12h1v1h-1zM29 13h9v1h-9zM29 14h1v1h-1zM33 14h1v1h-1zM37 14h1v1h-1zM33 15h1v1h-1zM33 16h1v1h-1zM42 5h1v1h-1zM47 5h1v1h-1zM42 6h1v1h-1zM48 6h1v1h-1zM42 7h1v1h-1zM45 7h7v1h-7zM40 8h5v1h-5zM47 8h1v1h-1zM42 9h1v1h-1zM46 9h1v1h-1zM49 9h1v1h-1zM41 10h3v1h-3zM45 10h4v1h-4zM41 11h2v1h-2zM44 11h1v1h-1zM48 11h1v1h-1zM40 12h1v1h-1zM42 12h1v1h-1zM47 12h1v1h-1zM50 12h1v1h-1zM42 13h1v1h-1zM45 13h2v1h-2zM49 13h1v1h-1zM42 14h1v1h-1zM48 14h2v1h-2zM42 15h1v1h-1zM46 15h2v1h-2zM50 15h1v1h-1zM42 16h1v1h-1zM44 16h2v1h-2zM51 16h1v1h-1zM62 5h1v1h-1zM53 6h4v1h-4zM62 6h1v1h-1zM53 7h1v1h-1zM56 7h1v1h-1zM62 7h1v1h-1zM53 8h1v1h-1zM56 8h9v1h-9zM53 9h1v1h-1zM56 9h1v1h-1zM62 9h1v1h-1zM53 10h4v1h-4zM58 10h1v1h-1zM62 10h1v1h-1zM53 11h1v1h-1zM56 11h1v1h-1zM59 11h1v1h-1zM62 11h1v1h-1zM53 12h1v1h-1zM56 12h1v1h-1zM59 12h1v1h-1zM62 12h1v1h-1zM53 13h1v1h-1zM56 13h1v1h-1zM62 13h1v1h-1zM53 14h4v1h-4zM62 14h1v1h-1zM53 15h1v1h-1zM56 15h1v1h-1zM60 15h1v1h-1zM62 15h1v1h-1zM61 16h1v1h-1zM68 5h1v1h-1zM72 5h5v1h-5zM68 6h1v1h-1zM72 6h1v1h-1zM76 6h1v1h-1zM68 7h1v1h-1zM72 7h5v1h-5zM66 8h5v1h-5zM72 8h1v1h-1zM76 8h1v1h-1zM68 9h1v1h-1zM72 9h5v1h-5zM68 10h1v1h-1zM68 11h2v1h-2zM71 11h7v1h-7zM66 12h3v1h-3zM74 12h1v1h-1zM68 13h1v1h-1zM72 13h1v1h-1zM74 13h3v1h-3zM68 14h1v1h-1zM72 14h1v1h-1zM74 14h1v1h-1zM66 15h1v1h-1zM68 15h1v1h-1zM71 15h1v1h-1zM73 15h2v1h-2zM67 16h1v1h-1zM70 16h1v1h-1zM74 16h4v1h-4zM83 5h1v1h-1zM84 6h1v1h-1zM79 7h11v1h-11zM82 8h1v1h-1zM86 8h1v1h-1zM81 9h1v1h-1zM87 9h1v1h-1zM80 10h1v1h-1zM82 10h1v1h-1zM86 10h1v1h-1zM88 10h1v1h-1zM79 11h1v1h-1zM82 11h1v1h-1zM86 11h1v1h-1zM83 12h1v1h-1zM85 12h1v1h-1zM84 13h1v1h-1zM83 14h1v1h-1zM85 14h1v1h-1zM81 15h2v1h-2zM86 15h2v1h-2zM79 16h2v1h-2zM88 16h2v1h-2zM95 5h1v1h-1zM99 5h1v1h-1zM94 6h1v1h-1zM99 6h1v1h-1zM93 7h4v1h-4zM99 7h4v1h-4zM93 8h1v1h-1zM96 8h1v1h-1zM98 8h1v1h-1zM102 8h1v1h-1zM93 9h1v1h-1zM96 9h2v1h-2zM102 9h1v1h-1zM93 10h1v1h-1zM96 10h1v1h-1zM99 10h1v1h-1zM102 10h1v1h-1zM93 11h4v1h-4zM100 11h1v1h-1zM102 11h1v1h-1zM93 12h1v1h-1zM96 12h1v1h-1zM100 12h1v1h-1zM102 12h1v1h-1zM93 13h1v1h-1zM96 13h1v1h-1zM102 13h1v1h-1zM93 14h1v1h-1zM96 14h1v1h-1zM102 14h1v1h-1zM93 15h4v1h-4zM102 15h1v1h-1zM93 16h1v1h-1zM96 16h1v1h-1zM100 16h2v1h-2zM109 5h1v1h-1zM110 6h1v1h-1zM105 7h11v1h-11zM107 8h1v1h-1zM109 8h1v1h-1zM111 8h1v1h-1zM113 8h1v1h-1zM106 9h1v1h-1zM109 9h1v1h-1zM111 9h1v1h-1zM114 9h1v1h-1zM105 10h1v1h-1zM109 10h1v1h-1zM111 10h1v1h-1zM115 10h1v1h-1zM106 11h9v1h-9zM108 12h1v1h-1zM112 12h1v1h-1zM109 13h1v1h-1zM111 13h1v1h-1zM110 14h1v1h-1zM108 15h2v1h-2zM111 15h2v1h-2zM105 16h3v1h-3zM113 16h3v1h-3zM120 5h8v1h-8zM120 6h1v1h-1zM123 6h1v1h-1zM127 6h1v1h-1zM120 7h1v1h-1zM124 7h1v1h-1zM127 7h1v1h-1zM118 8h12v1h-12zM120 9h1v1h-1zM124 9h1v1h-1zM127 9h1v1h-1zM120 10h8v1h-8zM120 11h1v1h-1zM124 11h1v1h-1zM127 11h1v1h-1zM120 12h8v1h-8zM124 13h1v1h-1zM120 14h8v1h-8zM124 15h1v1h-1zM118 16h12v1h-12z" fill="#6A8759"/></svg>
<div class="code" style="left:1445px;top:406px;color:#6A8759">&quot;</div>
<div class="code" style="left:1453px;top:406px;color:#A9B7C6">)</div>
<svg style="left:0;top:0" width="1" height="1"><path d="M455.5 412.5h8v6.5l-4 4l-4 -4z" fill="#313335" stroke="#5F6060"/><path d="M457.5 416.5h4" fill="none" stroke="#5F6060"/></svg>
<div class="code" style="left:497px;top:428px;color:#BBB529">@GetMapping</div>
<div class="code" style="left:585px;top:428px;color:#A9B7C6">(</div>
<svg style="left:0;top:0" width="1" height="1"><rect x="593" y="432" width="21" height="12" rx="4" fill="#3B3B3B"/><circle cx="599.0" cy="438.0" r="5" fill="#8E9295"/><path d="M596.9 434.6q2.6 -1 5 1.4q0.5 2.2 -0.7 3.8q-1.9 -0.2 -1.9 -1.7q-1 -0.4 -1.4 -1.5z" fill="#3B3B3B"/><path d="M595.3 438.0q0.7 2 2.4 2.7" fill="none" stroke="#3B3B3B" stroke-width="1.2"/><path d="M606.5 436.5l3 3l3 -3" fill="none" stroke="#7F8386" stroke-width="1.1"/></svg>
<div class="code" style="left:614px;top:428px;color:#6A8759">&quot;</div>
<div class="code" style="left:622px;top:428px;color:#6A8759">/task/complete</div>
<div class="a" style="left:622px;top:445px;width:112px;height:1px;background:#7D8799"></div>
<div class="code" style="left:734px;top:428px;color:#6A8759">&quot;</div>
<div class="code" style="left:742px;top:428px;color:#A9B7C6">)</div>
<svg style="left:0;top:0" width="1" height="1"><path d="M455.5 442.5v-6l4 -4l4 4v6z" fill="#313335" stroke="#5F6060"/><path d="M457.5 439.5h4" fill="none" stroke="#5F6060"/></svg>
<div class="code" style="left:497px;top:450px;color:#CC7832">public </div>
<div class="code" style="left:553px;top:450px;color:#A9B7C6">RspBase&lt;List&lt;Map&lt;String</div>
<div class="code" style="left:737px;top:450px;color:#CC7832">, </div>
<div class="code" style="left:753px;top:450px;color:#A9B7C6">Object&gt;&gt;&gt; </div>
<div class="code" style="left:833px;top:450px;color:#FFC66D">taskComplete</div>
<div class="code" style="left:929px;top:450px;color:#A9B7C6">(</div>
<div class="code" style="left:937px;top:450px;color:#BBB529">@RequestParam </div>
<div class="code" style="left:1049px;top:450px;color:#A9B7C6">String candidateGroup</div>
<div class="code" style="left:1217px;top:450px;color:#CC7832">, </div>
<div class="code" style="left:1233px;top:450px;color:#BBB529">@RequestParam </div>
<div class="code" style="left:1345px;top:450px;color:#A9B7C6">String completeVariableKey</div>
<svg style="left:0;top:0" width="1" height="1"><path d="M455.5 456.5h8v8h-8z" fill="#313335" stroke="#5F6060"/><path d="M457.5 460.5h4M459.5 458.5v4" fill="none" stroke="#5F6060"/></svg>
<svg style="left:0;top:0" width="1" height="1"><circle cx="419.5" cy="459.5" r="6.6" fill="#58A23D"/><path d="M414.5 455.0L421 461.0" stroke="#313335" stroke-width="1.3"/><circle cx="423" cy="462.5" r="5.2" fill="#313335"/><circle cx="423" cy="462.5" r="4.1" fill="#AEB4B8"/><path d="M421.2 459.3q2.2 -0.8 4.2 1.2q0.4 1.8 -0.6 3.2q-1.6 -0.2 -1.6 -1.4q-0.8 -0.3 -1.2 -1.2z" fill="#313335"/><path d="M419.6 462.2q0.6 1.6 2 2.2" fill="none" stroke="#313335" stroke-width="1"/></svg>
<div class="code" style="left:497px;top:494px;color:#BBB529">@APIDesc</div>
<div class="code" style="left:561px;top:494px;color:#A9B7C6">(</div>
<div class="code" style="left:569px;top:494px;color:#6A8759">&quot;</div>
<svg style="left:577px;top:493px" width="104" height="22" shape-rendering="crispEdges"><path d="M1 5h4v1h-4zM6 5h2v1h-2zM10 5h2v1h-2zM4 6h1v1h-1zM8 6h2v1h-2zM2 7h1v1h-1zM4 7h1v1h-1zM8 7h1v1h-1zM10 7h1v1h-1zM2 8h1v1h-1zM4 8h1v1h-1zM6 8h2v1h-2zM11 8h1v1h-1zM2 9h1v1h-1zM4 9h1v1h-1zM2 10h4v1h-4zM7 10h1v1h-1zM11 10h1v1h-1zM5 11h1v1h-1zM7 11h1v1h-1zM11 11h1v1h-1zM3 12h3v1h-3zM8 12h1v1h-1zM10 12h1v1h-1zM1 13h2v1h-2zM5 13h1v1h-1zM8 13h1v1h-1zM10 13h1v1h-1zM5 14h1v1h-1zM9 14h1v1h-1zM3 15h1v1h-1zM5 15h1v1h-1zM8 15h1v1h-1zM10 15h1v1h-1zM4 16h1v1h-1zM6 16h2v1h-2zM11 16h2v1h-2zM14 5h11v1h-11zM14 6h1v1h-1zM24 6h1v1h-1zM14 7h1v1h-1zM24 7h1v1h-1zM14 8h1v1h-1zM17 8h5v1h-5zM24 8h1v1h-1zM14 9h1v1h-1zM17 9h1v1h-1zM21 9h1v1h-1zM24 9h1v1h-1zM14 10h1v1h-1zM17 10h1v1h-1zM21 10h1v1h-1zM24 10h1v1h-1zM14 11h1v1h-1zM17 11h1v1h-1zM21 11h1v1h-1zM24 11h1v1h-1zM14 12h1v1h-1zM17 12h5v1h-5zM24 12h1v1h-1zM14 13h1v1h-1zM17 13h1v1h-1zM21 13h1v1h-1zM24 13h1v1h-1zM14 14h1v1h-1zM24 14h1v1h-1zM14 15h11v1h-11zM14 16h1v1h-1zM24 16h1v1h-1zM28 5h1v1h-1zM34 5h1v1h-1zM29 6h1v1h-1zM31 6h8v1h-8zM34 7h1v1h-1zM27 8h1v1h-1zM33 8h1v1h-1zM28 9h1v1h-1zM32 9h1v1h-1zM36 9h1v1h-1zM29 10h1v1h-1zM31 10h7v1h-7zM29 11h1v1h-1zM37 11h1v1h-1zM29 12h1v1h-1zM32 12h1v1h-1zM34 12h1v1h-1zM36 12h1v1h-1zM27 13h2v1h-2zM32 13h1v1h-1zM34 13h1v1h-1zM36 13h1v1h-1zM28 14h1v1h-1zM32 14h1v1h-1zM34 14h1v1h-1zM36 14h1v1h-1zM38 14h1v1h-1zM28 15h1v1h-1zM31 15h1v1h-1zM34 15h1v1h-1zM36 15h1v1h-1zM38 15h1v1h-1zM28 16h1v1h-1zM30 16h1v1h-1zM34 16h1v1h-1zM36 16h3v1h-3zM43 5h2v1h-2zM46 5h5v1h-5zM40 6h3v1h-3zM46 6h1v1h-1zM50 6h1v1h-1zM42 7h1v1h-1zM46 7h1v1h-1zM50 7h1v1h-1zM42 8h1v1h-1zM46 8h5v1h-5zM40 9h5v1h-5zM42 10h1v1h-1zM46 10h5v1h-5zM41 11h3v1h-3zM48 11h1v1h-1zM41 12h2v1h-2zM44 12h1v1h-1zM48 12h1v1h-1zM40 13h1v1h-1zM42 13h1v1h-1zM46 13h5v1h-5zM42 14h1v1h-1zM48 14h1v1h-1zM42 15h1v1h-1zM48 15h1v1h-1zM42 16h1v1h-1zM45 16h7v1h-7zM60 5h2v1h-2zM54 6h6v1h-6zM58 7h1v1h-1zM53 8h11v1h-11zM55 9h1v1h-1zM58 9h1v1h-1zM61 9h1v1h-1zM55 10h7v1h-7zM55 11h1v1h-1zM58 11h1v1h-1zM61 11h1v1h-1zM55 12h7v1h-7zM58 13h1v1h-1zM54 14h9v1h-9zM58 15h1v1h-1zM53 16h11v1h-11zM69 5h1v1h-1zM76 5h2v1h-2zM66 6h7v1h-7zM74 6h2v1h-2zM67 7h1v1h-1zM71 7h1v1h-1zM74 7h1v1h-1zM68 8h1v1h-1zM70 8h1v1h-1zM74 8h1v1h-1zM66 9h7v1h-7zM74 9h4v1h-4zM69 10h1v1h-1zM74 10h1v1h-1zM76 10h1v1h-1zM66 11h7v1h-7zM74 11h1v1h-1zM76 11h1v1h-1zM69 12h1v1h-1zM74 12h1v1h-1zM76 12h1v1h-1zM67 13h1v1h-1zM69 13h1v1h-1zM71 13h1v1h-1zM74 13h1v1h-1zM76 13h1v1h-1zM67 14h1v1h-1zM69 14h1v1h-1zM72 14h1v1h-1zM74 14h1v1h-1zM76 14h1v1h-1zM66 15h1v1h-1zM69 15h1v1h-1zM73 15h1v1h-1zM76 15h1v1h-1zM68 16h2v1h-2zM72 16h1v1h-1zM76 16h1v1h-1zM81 5h1v1h-1zM84 5h1v1h-1zM87 5h1v1h-1zM81 6h1v1h-1zM84 6h1v1h-1zM88 6h1v1h-1zM80 7h1v1h-1zM84 7h1v1h-1zM80 8h10v1h-10zM83 9h1v1h-1zM83 10h6v1h-6zM83 11h1v1h-1zM88 11h1v1h-1zM82 12h1v1h-1zM84 12h1v1h-1zM87 12h1v1h-1zM82 13h1v1h-1zM85 13h1v1h-1zM87 13h1v1h-1zM81 14h1v1h-1zM86 14h1v1h-1zM80 15h1v1h-1zM84 15h2v1h-2zM87 15h1v1h-1zM79 16h1v1h-1zM82 16h2v1h-2zM88 16h2v1h-2zM95 5h1v1h-1zM95 6h1v1h-1zM99 6h4v1h-4zM93 7h5v1h-5zM102 7h1v1h-1zM95 8h1v1h-1zM102 8h1v1h-1zM95 9h1v1h-1zM99 9h4v1h-4zM92 10h6v1h-6zM99 10h1v1h-1zM95 11h1v1h-1zM99 11h1v1h-1zM103 11h1v1h-1zM93 12h1v1h-1zM95 12h3v1h-3zM99 12h1v1h-1zM103 12h1v1h-1zM93 13h1v1h-1zM95 13h1v1h-1zM99 13h1v1h-1zM103 13h1v1h-1zM93 14h3v1h-3zM100 14h4v1h-4zM93 15h1v1h-1zM95 15h1v1h-1zM92 16h1v1h-1zM96 16h8v1h-8z" fill="#6A8759"/></svg>
<div class="code" style="left:681px;top:494px;color:#6A8759">&quot;</div>
<div class="code" style="left:689px;top:494px;color:#A9B7C6">)</div>
<svg style="left:0;top:0" width="1" height="1"><path d="M455.5 500.5h8v6.5l-4 4l-4 -4z" fill="#313335" stroke="#5F6060"/><path d="M457.5 504.5h4" fill="none" stroke="#5F6060"/></svg>
<div class="code" style="left:497px;top:516px;color:#BBB529">@GetMapping</div>
<div class="code" style="left:585px;top:516px;color:#A9B7C6">(</div>
<svg style="left:0;top:0" width="1" height="1"><rect x="593" y="520" width="21" height="12" rx="4" fill="#3B3B3B"/><circle cx="599.0" cy="526.0" r="5" fill="#8E9295"/><path d="M596.9 522.6q2.6 -1 5 1.4q0.5 2.2 -0.7 3.8q-1.9 -0.2 -1.9 -1.7q-1 -0.4 -1.4 -1.5z" fill="#3B3B3B"/><path d="M595.3 526.0q0.7 2 2.4 2.7" fill="none" stroke="#3B3B3B" stroke-width="1.2"/><path d="M606.5 524.5l3 3l3 -3" fill="none" stroke="#7F8386" stroke-width="1.1"/></svg>
<div class="code" style="left:614px;top:516px;color:#6A8759">&quot;</div>
<div class="code" style="left:622px;top:516px;color:#6A8759">/reinit</div>
<div class="a" style="left:622px;top:533px;width:56px;height:1px;background:#7D8799"></div>
<div class="code" style="left:678px;top:516px;color:#6A8759">&quot;</div>
<div class="code" style="left:686px;top:516px;color:#A9B7C6">)</div>
<svg style="left:0;top:0" width="1" height="1"><path d="M455.5 530.5v-6l4 -4l4 4v6z" fill="#313335" stroke="#5F6060"/><path d="M457.5 527.5h4" fill="none" stroke="#5F6060"/></svg>
<div class="code" style="left:497px;top:538px;color:#CC7832">public </div>
<div class="code" style="left:553px;top:538px;color:#A9B7C6">RspBase&lt;Map&lt;String</div>
<div class="code" style="left:697px;top:538px;color:#CC7832">, </div>
<div class="code" style="left:713px;top:538px;color:#A9B7C6">Object&gt;&gt; </div>
<div class="code" style="left:785px;top:538px;color:#FFC66D">reinit</div>
<div class="code" style="left:833px;top:538px;color:#A9B7C6">(</div>
<div class="code" style="left:841px;top:538px;color:#BBB529">@RequestParam </div>
<div class="code" style="left:953px;top:538px;color:#A9B7C6">String taskId) </div>
<div class="a" style="left:1073px;top:537px;width:40px;height:22px;background:#3A3A3A"></div>
<div class="code" style="left:1073px;top:538px;color:#A9B7C6">{...}</div>
<svg style="left:0;top:0" width="1" height="1"><path d="M455.5 544.5h8v8h-8z" fill="#313335" stroke="#5F6060"/><path d="M457.5 548.5h4M459.5 546.5v4" fill="none" stroke="#5F6060"/></svg>
<svg style="left:0;top:0" width="1" height="1"><circle cx="419.5" cy="547.5" r="6.6" fill="#58A23D"/><path d="M414.5 543.0L421 549.0" stroke="#313335" stroke-width="1.3"/><circle cx="423" cy="550.5" r="5.2" fill="#313335"/><circle cx="423" cy="550.5" r="4.1" fill="#AEB4B8"/><path d="M421.2 547.3q2.2 -0.8 4.2 1.2q0.4 1.8 -0.6 3.2q-1.6 -0.2 -1.6 -1.4q-0.8 -0.3 -1.2 -1.2z" fill="#313335"/><path d="M419.6 550.2q0.6 1.6 2 2.2" fill="none" stroke="#313335" stroke-width="1"/></svg>
<div class="code" style="left:497px;top:582px;color:#BBB529">@APIDesc</div>
<div class="code" style="left:561px;top:582px;color:#A9B7C6">(</div>
<div class="code" style="left:569px;top:582px;color:#6A8759">&quot;</div>
<svg style="left:577px;top:581px" width="78" height="22" shape-rendering="crispEdges"><path d="M5 5h1v1h-1zM9 5h1v1h-1zM1 6h12v1h-12zM5 7h1v1h-1zM9 7h1v1h-1zM3 8h1v1h-1zM5 8h1v1h-1zM9 8h2v1h-2zM4 9h1v1h-1zM9 9h1v1h-1zM11 9h1v1h-1zM3 10h2v1h-2zM6 10h7v1h-7zM2 11h1v1h-1zM5 11h1v1h-1zM9 11h1v1h-1zM4 12h2v1h-2zM9 12h1v1h-1zM3 13h1v1h-1zM5 13h1v1h-1zM8 13h1v1h-1zM10 13h1v1h-1zM2 14h1v1h-1zM5 14h1v1h-1zM8 14h1v1h-1zM10 14h1v1h-1zM5 15h1v1h-1zM7 15h1v1h-1zM11 15h1v1h-1zM3 16h2v1h-2zM6 16h1v1h-1zM12 16h1v1h-1zM14 5h6v1h-6zM15 6h1v1h-1zM18 6h1v1h-1zM20 6h5v1h-5zM15 7h1v1h-1zM18 7h1v1h-1zM20 7h1v1h-1zM24 7h1v1h-1zM15 8h4v1h-4zM20 8h1v1h-1zM24 8h1v1h-1zM15 9h1v1h-1zM18 9h1v1h-1zM21 9h1v1h-1zM24 9h1v1h-1zM15 10h1v1h-1zM18 10h1v1h-1zM21 10h1v1h-1zM23 10h1v1h-1zM15 11h4v1h-4zM21 11h1v1h-1zM23 11h1v1h-1zM15 12h1v1h-1zM18 12h1v1h-1zM22 12h1v1h-1zM15 13h1v1h-1zM18 13h2v1h-2zM22 13h1v1h-1zM15 14h4v1h-4zM21 14h1v1h-1zM23 14h1v1h-1zM14 15h2v1h-2zM18 15h1v1h-1zM20 15h1v1h-1zM24 15h1v1h-1zM18 16h2v1h-2zM25 16h1v1h-1zM28 5h1v1h-1zM34 5h1v1h-1zM29 6h1v1h-1zM31 6h8v1h-8zM34 7h1v1h-1zM27 8h1v1h-1zM33 8h1v1h-1zM28 9h1v1h-1zM32 9h1v1h-1zM36 9h1v1h-1zM29 10h1v1h-1zM31 10h7v1h-7zM29 11h1v1h-1zM37 11h1v1h-1zM29 12h1v1h-1zM32 12h1v1h-1zM34 12h1v1h-1zM36 12h1v1h-1zM27 13h2v1h-2zM32 13h1v1h-1zM34 13h1v1h-1zM36 13h1v1h-1zM28 14h1v1h-1zM32 14h1v1h-1zM34 14h1v1h-1zM36 14h1v1h-1zM38 14h1v1h-1zM28 15h1v1h-1zM31 15h1v1h-1zM34 15h1v1h-1zM36 15h1v1h-1zM38 15h1v1h-1zM28 16h1v1h-1zM30 16h1v1h-1zM34 16h1v1h-1zM36 16h3v1h-3zM43 5h2v1h-2zM46 5h5v1h-5zM40 6h3v1h-3zM46 6h1v1h-1zM50 6h1v1h-1zM42 7h1v1h-1zM46 7h1v1h-1zM50 7h1v1h-1zM42 8h1v1h-1zM46 8h5v1h-5zM40 9h5v1h-5zM42 10h1v1h-1zM46 10h5v1h-5zM41 11h3v1h-3zM48 11h1v1h-1zM41 12h2v1h-2zM44 12h1v1h-1zM48 12h1v1h-1zM40 13h1v1h-1zM42 13h1v1h-1zM46 13h5v1h-5zM42 14h1v1h-1zM48 14h1v1h-1zM42 15h1v1h-1zM48 15h1v1h-1zM42 16h1v1h-1zM45 16h7v1h-7zM55 5h10v1h-10zM55 6h1v1h-1zM55 7h1v1h-1zM59 7h1v1h-1zM55 8h1v1h-1zM59 8h1v1h-1zM55 9h9v1h-9zM55 10h1v1h-1zM59 10h1v1h-1zM63 10h1v1h-1zM55 11h1v1h-1zM59 11h1v1h-1zM63 11h1v1h-1zM55 12h1v1h-1zM59 12h1v1h-1zM63 12h1v1h-1zM55 13h1v1h-1zM58 13h1v1h-1zM63 13h1v1h-1zM54 14h1v1h-1zM58 14h1v1h-1zM63 14h1v1h-1zM54 15h1v1h-1zM57 15h1v1h-1zM63 15h1v1h-1zM53 16h1v1h-1zM56 16h1v1h-1zM61 16h2v1h-2zM71 5h1v1h-1zM71 6h1v1h-1zM67 7h9v1h-9zM67 8h1v1h-1zM71 8h1v1h-1zM75 8h1v1h-1zM67 9h1v1h-1zM71 9h1v1h-1zM75 9h1v1h-1zM67 10h9v1h-9zM68 11h1v1h-1zM71 11h1v1h-1zM69 12h1v1h-1zM71 12h1v1h-1zM70 13h1v1h-1zM69 14h1v1h-1zM71 14h1v1h-1zM68 15h1v1h-1zM72 15h2v1h-2zM66 16h2v1h-2zM74 16h3v1h-3z" fill="#6A8759"/></svg>
<div class="code" style="left:655px;top:582px;color:#6A8759">  processKey</div>
<svg style="left:751px;top:581px" width="13" height="22" shape-rendering="crispEdges"><path d="M3 8h2v2h-2zM3 14h2v2h-2z" fill="#6A8759"/></svg>
<div class="code" style="left:764px;top:582px;color:#6A8759">RequestLeaveApply2&quot;</div>
<div class="code" style="left:916px;top:582px;color:#A9B7C6">)</div>
<svg style="left:0;top:0" width="1" height="1"><path d="M455.5 588.5h8v6.5l-4 4l-4 -4z" fill="#313335" stroke="#5F6060"/><path d="M457.5 592.5h4" fill="none" stroke="#5F6060"/></svg>
<div class="a" style="left:1424px;top:10px;width:2px;height:565px;background:rgba(110,110,110,0.45)"></div>
<svg style="left:0;top:0" width="1" height="1"><circle cx="479" cy="587.0" r="5" fill="#F0A732"/><rect x="476" y="589.5" width="6" height="2.5" fill="#F0A732"/><rect x="476" y="593.0" width="6" height="1" fill="#C8C8C8"/><rect x="477" y="595.0" width="4" height="1" fill="#A8A8A8"/></svg>
</body></html>
